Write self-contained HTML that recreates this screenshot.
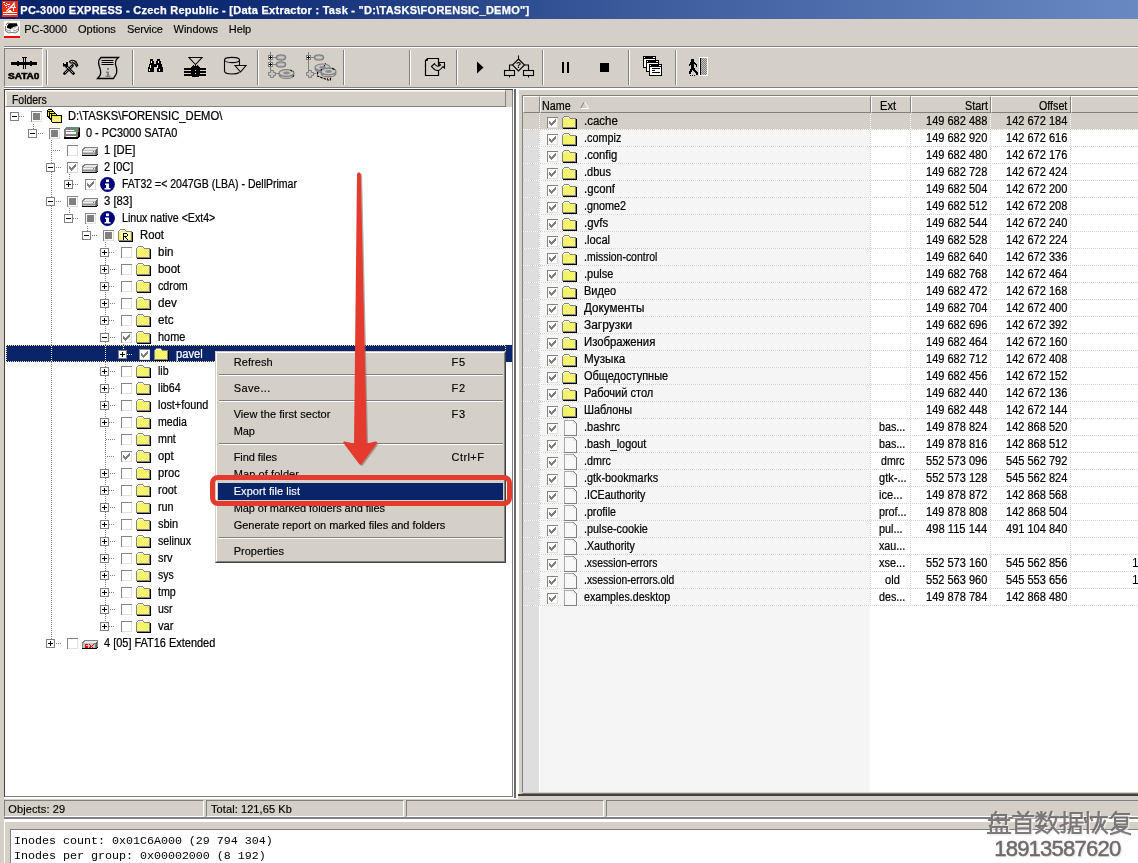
<!DOCTYPE html><html><head><meta charset="utf-8"><title>PC-3000</title><style>html,body{margin:0;padding:0}html{overflow:hidden}body{width:1138px;height:863px;overflow:hidden;position:relative;background:#d4d0c8;font-family:"Liberation Sans",sans-serif}div,span,svg{position:absolute}span{white-space:pre}svg{overflow:visible}</style></head><body><svg width="0" height="0" style="left:0;top:0"><defs><pattern id="yd" width="2" height="2" patternUnits="userSpaceOnUse"><rect width="2" height="2" fill="#ffff00"/><rect x="0" y="0" width="1" height="1" fill="#f0f0c8"/><rect x="1" y="1" width="1" height="1" fill="#f0f0c8"/></pattern><pattern id="dith" width="2" height="2" patternUnits="userSpaceOnUse"><rect width="2" height="2" fill="#808080"/><rect x="0" y="0" width="1" height="1" fill="#c0c0c0"/><rect x="1" y="1" width="1" height="1" fill="#c0c0c0"/></pattern></defs></svg><div id="r" style="left:0;top:0;width:1138px;height:863px;overflow:hidden;will-change:transform"><div style="left:0;top:0;width:1138px;height:19px;background:linear-gradient(90deg,#0a246a 0%,#0e2a72 20%,#3a5a9c 55%,#6889c2 100%);"></div><svg style="left:2px;top:1px" width="16" height="16" viewBox="0 0 16 16">
<rect width="16" height="16" fill="#e8301c"/>
<g shape-rendering="crispEdges" fill="#fff"><rect x="1" y="11" width="14" height="1"/><rect x="1" y="13" width="14" height="1"/><rect x="6" y="10" width="4" height="1"/><rect x="7" y="9" width="2" height="1"/>
<rect x="1" y="1" width="2" height="1"/><rect x="2" y="3" width="1" height="1"/><rect x="4" y="2" width="1" height="1"/><rect x="3" y="4" width="2" height="1"/><rect x="5" y="3" width="2" height="1"/><rect x="4" y="6" width="1" height="1"/><rect x="6" y="5" width="1" height="1"/><rect x="7" y="3" width="1" height="1"/>
<rect x="11" y="6" width="1" height="4"/><rect x="8" y="6" width="6" height="1"/></g>
<path d="M4.500 10.500 L12 2.500 M9.500 6 L12 2 L12.500 6" stroke="#fff" stroke-width="1.100" fill="none"/>
</svg><span style="left:20.30px;top:0px;font:bold 11px/20px 'Liberation Sans',sans-serif;color:#fff;letter-spacing:0.262px;-webkit-text-stroke:0.25px #fff;">PC-3000 EXPRESS - Czech Republic - [Data Extractor : Task - &quot;D:\TASKS\FORENSIC_DEMO&quot;]</span><svg style="left:4px;top:21px" width="16" height="17" viewBox="0 0 16 17">
<rect width="16" height="15" fill="#fff"/>
<path d="M5 2.200 L13 2.200 L13.600 5 L9.500 6 L6.500 8 L3 7 L3 5 Z" fill="#000"/>
<path d="M2 4 Q2.500 2 5 2" fill="none" stroke="#666" stroke-width="1"/>
<path d="M1.500 5 V10 Q4 13 8 11.500 Q12 13 14.500 10 V5.500" fill="none" stroke="#777" stroke-width="1"/>
<path d="M2 8.500 Q4.500 10.500 7 9 M9 9 Q11.500 10.500 14 8 M2.500 10.500 Q5 12 7 11 M9.500 11 Q12 12 13.500 10.300" fill="none" stroke="#999" stroke-width="1"/>
<path d="M7.500 8 L13.500 5.500" stroke="#bbb" stroke-width="1"/>
<rect x="0" y="15" width="16" height="2" fill="#f00"/>
</svg><span style="left:24.30px;top:19px;font:11px/20px 'Liberation Sans',sans-serif;color:#000;letter-spacing:-0.086px;-webkit-text-stroke:0.15px #000;">PC-3000</span><span style="left:78.00px;top:19px;font:11px/20px 'Liberation Sans',sans-serif;color:#000;letter-spacing:-0.018px;-webkit-text-stroke:0.15px #000;">Options</span><span style="left:127.10px;top:19px;font:11px/20px 'Liberation Sans',sans-serif;color:#000;letter-spacing:-0.147px;-webkit-text-stroke:0.15px #000;">Service</span><span style="left:173.60px;top:19px;font:11px/20px 'Liberation Sans',sans-serif;color:#000;letter-spacing:-0.054px;-webkit-text-stroke:0.15px #000;">Windows</span><span style="left:228.80px;top:19px;font:11px/20px 'Liberation Sans',sans-serif;color:#000;letter-spacing:-0.108px;-webkit-text-stroke:0.15px #000;">Help</span><div style="left:4px;top:46px;width:1134px;height:1px;background:#808080;"></div><div style="left:4px;top:47px;width:1134px;height:1px;background:#fff;"></div><div style="left:4px;top:87px;width:1134px;height:1px;background:#808080;"></div><div style="left:4px;top:88px;width:1134px;height:1px;background:#fff;"></div><div style="left:4px;top:48px;width:39px;height:39px;border-top:1px solid #808080;border-left:1px solid #808080;border-right:1px solid #fff;border-bottom:1px solid #fff;box-sizing:border-box;"></div><svg style="left:4px;top:48px" width="39" height="39" viewBox="0 0 39 39" shape-rendering="crispEdges">
<rect x="7" y="14" width="26" height="3" fill="#000"/>
<rect x="13" y="13" width="2" height="5" fill="#000"/><rect x="26" y="13" width="2" height="5" fill="#000"/>
<rect x="12" y="14" width="4" height="3" fill="#000"/>
<rect x="18" y="9" width="5" height="1" fill="#000"/>
<rect x="19" y="9" width="1" height="12" fill="#000"/><rect x="21" y="9" width="1" height="12" fill="#000"/>
<rect x="20" y="10" width="1" height="4" fill="#d4d0c8"/><rect x="20" y="17" width="1" height="4" fill="#d4d0c8"/>
</svg><span style="left:8.35px;top:66px;font:bold 9.5px/20px 'Liberation Sans',sans-serif;color:#000;transform:scaleX(1.0527);transform-origin:0 0;-webkit-text-stroke:0.55px #000;">SATA0</span><div style="left:46px;top:50px;width:1px;height:35px;background:#808080;"></div><div style="left:47px;top:50px;width:1px;height:35px;background:#fff;"></div><div style="left:132px;top:50px;width:1px;height:35px;background:#808080;"></div><div style="left:133px;top:50px;width:1px;height:35px;background:#fff;"></div><div style="left:257px;top:50px;width:1px;height:35px;background:#808080;"></div><div style="left:258px;top:50px;width:1px;height:35px;background:#fff;"></div><div style="left:343px;top:50px;width:1px;height:35px;background:#808080;"></div><div style="left:344px;top:50px;width:1px;height:35px;background:#fff;"></div><div style="left:409px;top:50px;width:1px;height:35px;background:#808080;"></div><div style="left:410px;top:50px;width:1px;height:35px;background:#fff;"></div><div style="left:456px;top:50px;width:1px;height:35px;background:#808080;"></div><div style="left:457px;top:50px;width:1px;height:35px;background:#fff;"></div><div style="left:542px;top:50px;width:1px;height:35px;background:#808080;"></div><div style="left:543px;top:50px;width:1px;height:35px;background:#fff;"></div><div style="left:628px;top:50px;width:1px;height:35px;background:#808080;"></div><div style="left:629px;top:50px;width:1px;height:35px;background:#fff;"></div><div style="left:675px;top:50px;width:1px;height:35px;background:#808080;"></div><div style="left:676px;top:50px;width:1px;height:35px;background:#fff;"></div><svg style="left:62px;top:59px" width="17" height="16" viewBox="0 0 17 16">
<path d="M2.500 14.500 L10.500 6.500" stroke="#000" stroke-width="2.700" stroke-linecap="round" fill="none"/>
<path d="M3 14 L10.500 6.500" stroke="#d4d0c8" stroke-width="1" stroke-dasharray="1.100 0.700" fill="none"/>
<path d="M11.500 14.500 L4.500 7.500" stroke="#000" stroke-width="2.700" stroke-linecap="round" fill="none"/>
<path d="M11 14 L4.500 7.500" stroke="#d4d0c8" stroke-width="1" stroke-dasharray="1.100 0.700" fill="none"/>
<path d="M1 4 h2 v-1 h3 v4.500 h-5 z" fill="#000"/><rect x="2" y="3" width="2" height="2" fill="#d4d0c8"/>
<path d="M7.500 2.500 Q11 -0.300 14.300 3 L15.800 6.300 L14.500 7.600 L13 5 L11 3.800 L8.500 4 Z" fill="#d4d0c8" stroke="#000" stroke-width="1.100"/>
<path d="M10 2.500 L11.500 3.500 M12.500 2.500 L13.500 4.500 M14 4.500 L14.800 6" stroke="#000" stroke-width="0.800"/>
</svg><svg style="left:96px;top:56px" width="24" height="24" viewBox="0 0 24 24">
<path d="M5 1.5 H22.5 L20 4 Q18.5 8 20.5 12 Q21.5 17 19 20 L17.5 22.5 H1.5 L4 19.5 Q5.5 16 3.5 11 Q2 6 3 4 Z" fill="none" stroke="#000" stroke-width="1.3"/>
<path d="M5.5 4.5 H17.5 M5.5 6.5 H17.5 M5.5 8.5 H17.5" stroke="#000" stroke-width="1.1"/>
<rect x="11" y="12" width="2" height="2" fill="#808080"/><path d="M10 15.5 h3 v4 h1.5 v1.5 h-5 v-1.5 h1.5 v-2.5 h-1 z" fill="#808080"/>
</svg><svg style="left:147px;top:58px" width="16" height="15" viewBox="0 0 17 15" preserveAspectRatio="none" shape-rendering="crispEdges">
<path d="M3 1h3v2h1v3h3V3h1V1h3v2h1v3h1v3h1v5h-6V9H7v5H1V9h1V6h1V3z" fill="#000"/>
<rect x="4" y="3" width="1" height="2" fill="#fff"/><rect x="12" y="3" width="1" height="2" fill="#fff"/>
<rect x="3" y="7" width="1" height="3" fill="#fff"/><rect x="11" y="7" width="1" height="3" fill="#fff"/>
<rect x="2" y="11" width="1" height="2" fill="#fff"/><rect x="13" y="11" width="1" height="2" fill="#fff"/>
<rect x="8" y="6" width="1" height="2" fill="#d4d0c8"/>
</svg><svg style="left:183px;top:56px" width="24" height="22" viewBox="0 0 24 22">
<path d="M6 1.500 H19 L12.500 8.500 Z" fill="none" stroke="#000" stroke-width="1.100"/>
<g shape-rendering="crispEdges"><rect x="1" y="12" width="22" height="2" fill="#000"/><rect x="1" y="15" width="22" height="2" fill="#000"/><rect x="1" y="18" width="22" height="2" fill="#000"/>
<rect x="8" y="11" width="9" height="9" fill="#000"/><rect x="9" y="10" width="7" height="1" fill="#000"/><rect x="10" y="9" width="1" height="1" fill="#000"/><rect x="12" y="9" width="1" height="1" fill="#000"/><rect x="14" y="9" width="1" height="1" fill="#000"/>
<rect x="12" y="14" width="1" height="1" fill="#d4d0c8"/><rect x="12" y="17" width="1" height="1" fill="#d4d0c8"/><rect x="9" y="20" width="7" height="1" fill="#000"/></g>
</svg><svg style="left:223px;top:56px" width="25" height="20" viewBox="0 0 25 20">
<ellipse cx="9" cy="4" rx="7.5" ry="2.6" fill="none" stroke="#000" stroke-width="1.1"/>
<path d="M1.5 4 V15 Q1.5 18 9 18 Q14 18 16.5 16.5 M16.5 4 V9" fill="none" stroke="#000" stroke-width="1.1"/>
<path d="M12 9.5 H23 L17.5 16 Z" fill="#d4d0c8" stroke="#000" stroke-width="1.1"/>
</svg><svg style="left:267px;top:51px" width="32" height="30" viewBox="0 0 32 30"><rect x="3" y="1" width="1" height="19" fill="#808080"/><rect x="1" y="4" width="5" height="5" fill="#808080"/><rect x="2" y="5" width="3" height="3" fill="#fff"/><rect x="3" y="5" width="1" height="3" fill="#000"/><rect x="2" y="6" width="3" height="1" fill="#000"/><rect x="6" y="6" width="3" height="1" fill="#808080"/><ellipse cx="14" cy="6.5" rx="4.600" ry="2.600" fill="#b4b4b4" stroke="#808080" stroke-width="1.400"/><path d="M11.500 7.0 Q14 5.0 16.500 7.0" stroke="#d8d8d8" stroke-width="1" fill="none"/><rect x="1" y="11" width="5" height="5" fill="#808080"/><rect x="2" y="12" width="3" height="3" fill="#fff"/><rect x="3" y="12" width="1" height="3" fill="#000"/><rect x="2" y="13" width="3" height="1" fill="#000"/><rect x="6" y="13" width="3" height="1" fill="#808080"/><ellipse cx="14" cy="13.5" rx="4.600" ry="2.600" fill="#b4b4b4" stroke="#808080" stroke-width="1.400"/><path d="M11.500 14.0 Q14 12.0 16.500 14.0" stroke="#d8d8d8" stroke-width="1" fill="none"/><path d="M3.500 19.500 h3 v2 h2 v3 h-2 v2 h-3 v-2 h-2 v-3 h2 z" fill="#c4c4c4" stroke="#808080" stroke-width="1"/><rect x="9" y="22" width="3" height="1" fill="#808080"/><ellipse cx="19.5" cy="24" rx="7.500" ry="3.300" fill="#a8a8a8" stroke="#808080" stroke-width="1.200"/><rect x="14.5" y="25.5" width="10" height="1" fill="#d0d0d0"/><ellipse cx="19.5" cy="22" rx="7.500" ry="3.300" fill="#c8c8c8" stroke="#808080" stroke-width="1.200"/><ellipse cx="19.5" cy="22" rx="3.200" ry="1.400" fill="#8c8c8c"/><path d="M23.500 19.300 L26.300 20.500 M26.800 24.500 L25.500 26" stroke="#000" stroke-width="1.100" stroke-dasharray="1.500 1.200" fill="none"/></svg><svg style="left:305px;top:51px" width="32" height="30" viewBox="0 0 32 30"><rect x="3" y="1" width="1" height="19" fill="#808080"/><rect x="1" y="4" width="5" height="5" fill="#808080"/><rect x="2" y="5" width="3" height="3" fill="#fff"/><rect x="3" y="5" width="1" height="3" fill="#000"/><rect x="2" y="6" width="3" height="1" fill="#000"/><rect x="6" y="6" width="3" height="1" fill="#808080"/><ellipse cx="14" cy="6.5" rx="4.600" ry="2.600" fill="#b4b4b4" stroke="#808080" stroke-width="1.400"/><path d="M11.500 7.0 Q14 5.0 16.500 7.0" stroke="#d8d8d8" stroke-width="1" fill="none"/><path d="M3.500 19.500 h3 v2 h2 v3 h-2 v2 h-3 v-2 h-2 v-3 h2 z" fill="#c4c4c4" stroke="#808080" stroke-width="1"/><rect x="9" y="22" width="2" height="1" fill="#808080"/><ellipse cx="17.500" cy="18" rx="7.500" ry="3.300" fill="#a8a8a8" stroke="#808080" stroke-width="1.200"/><ellipse cx="17.500" cy="16.300" rx="7.500" ry="3.300" fill="#c8c8c8" stroke="#808080" stroke-width="1.200"/><ellipse cx="17.500" cy="16.300" rx="3.200" ry="1.400" fill="#8c8c8c"/><path d="M12.500 21 V25 L23 29 L25.500 29 L25.500 26" fill="none" stroke="#000" stroke-width="1.200" stroke-dasharray="2.500 1"/><ellipse cx="23.5" cy="22.5" rx="7.500" ry="3.300" fill="#a8a8a8" stroke="#808080" stroke-width="1.200"/><rect x="18.5" y="24.0" width="10" height="1" fill="#d0d0d0"/><ellipse cx="23.5" cy="20.5" rx="7.500" ry="3.300" fill="#c8c8c8" stroke="#808080" stroke-width="1.200"/><ellipse cx="23.5" cy="20.5" rx="3.200" ry="1.400" fill="#8c8c8c"/><path d="M16 19.500 L16.500 18 M19 15 L20 14.500 M27 17.300 L29.500 18.500" stroke="#000" stroke-width="1.100" fill="none"/><rect x="20" y="12" width="1" height="1" fill="#c00000"/><rect x="22" y="27" width="1" height="1" fill="#c00000"/></svg><svg style="left:424px;top:57px" width="23" height="20" viewBox="0 0 23 20">
<path d="M3.500 1.500 H14.500 V18.500 H1.500 V3.500 Z" fill="none" stroke="#000" stroke-width="1.200"/>
<path d="M1.500 3.500 H3.500 V1.500" fill="none" stroke="#000" stroke-width="1"/>
<path d="M7.500 9.500 L10.500 6.500 L11.500 8 Q13.500 10.500 16.500 8 L15 6.500 V5.500 H20.500 V11 L19 9.500 Q15 15.500 10.500 12.500 Z" fill="#d4d0c8" stroke="#000" stroke-width="1.100"/>
</svg><svg style="left:476px;top:61px" width="9" height="13" viewBox="0 0 9 13"><path d="M1 0.500 L7.500 6.500 L1 12.500 Z" fill="#000"/></svg><svg style="left:503px;top:55px" width="33" height="23" viewBox="0 0 33 23">
<path d="M15.500 0.500 V4" stroke="#000"/>
<path d="M15.500 4 L21.500 10 L15.500 16 L9.500 10 Z" fill="#d4d0c8" stroke="#000" stroke-width="1.100"/>
<path d="M9.500 10 H6.500 V15 M21.500 10 H25.500 V15" fill="none" stroke="#000" stroke-width="1.100"/>
<rect x="1.500" y="15.500" width="10" height="5" fill="#d4d0c8" stroke="#000" stroke-width="1.100"/>
<rect x="20.500" y="15.500" width="10" height="5" fill="#d4d0c8" stroke="#000" stroke-width="1.100"/>
<path d="M6.500 20.500 V22.500 M25.500 20.500 V22.500" stroke="#000"/>
<text x="15.500" y="13" font-family="Liberation Sans" font-size="8.500" font-weight="bold" text-anchor="middle" fill="#000">?</text>
</svg><div style="left:562px;top:62px;width:2px;height:11px;background:#000;"></div><div style="left:567px;top:62px;width:2px;height:11px;background:#000;"></div><div style="left:600px;top:63px;width:9px;height:9px;background:#000;"></div><svg style="left:642px;top:55px" width="22" height="22" viewBox="0 0 22 22" shape-rendering="crispEdges"><rect x="1" y="1" width="13" height="12" fill="#000"/><rect x="2" y="4" width="11" height="8" fill="#fff"/><rect x="2" y="2" width="1" height="1" fill="#fff"/><rect x="11" y="2" width="2" height="1" fill="#fff"/><rect x="4" y="5" width="13" height="12" fill="#000"/><rect x="5" y="8" width="11" height="8" fill="#fff"/><rect x="5" y="6" width="1" height="1" fill="#fff"/><rect x="14" y="6" width="2" height="1" fill="#fff"/><rect x="7" y="9" width="13" height="12" fill="#000"/><rect x="8" y="12" width="11" height="8" fill="#fff"/><rect x="8" y="10" width="1" height="1" fill="#fff"/><rect x="17" y="10" width="2" height="1" fill="#fff"/><rect x="10" y="13" width="8" height="1" fill="#000"/><rect x="10" y="15" width="3" height="1" fill="#000"/><rect x="10" y="17" width="8" height="1" fill="#000"/></svg><svg style="left:689px;top:59px" width="9" height="17" viewBox="0 0 9 17" shape-rendering="crispEdges"><rect x="2" y="0" width="1" height="1" fill="#000"/><rect x="3" y="0" width="1" height="1" fill="#000"/><rect x="4" y="0" width="1" height="1" fill="#000"/><rect x="2" y="1" width="1" height="1" fill="#000"/><rect x="3" y="1" width="1" height="1" fill="#000"/><rect x="4" y="1" width="1" height="1" fill="#000"/><rect x="2" y="2" width="1" height="1" fill="#000"/><rect x="3" y="2" width="1" height="1" fill="#000"/><rect x="4" y="2" width="1" height="1" fill="#000"/><rect x="1" y="3" width="1" height="1" fill="#000"/><rect x="2" y="3" width="1" height="1" fill="#000"/><rect x="3" y="3" width="1" height="1" fill="#000"/><rect x="4" y="3" width="1" height="1" fill="#000"/><rect x="5" y="3" width="1" height="1" fill="#000"/><rect x="1" y="4" width="1" height="1" fill="#000"/><rect x="2" y="4" width="1" height="1" fill="#000"/><rect x="3" y="4" width="1" height="1" fill="#000"/><rect x="4" y="4" width="1" height="1" fill="#000"/><rect x="5" y="4" width="1" height="1" fill="#000"/><rect x="6" y="4" width="1" height="1" fill="#000"/><rect x="0" y="5" width="1" height="1" fill="#000"/><rect x="1" y="5" width="1" height="1" fill="#000"/><rect x="2" y="5" width="1" height="1" fill="#000"/><rect x="3" y="5" width="1" height="1" fill="#000"/><rect x="4" y="5" width="1" height="1" fill="#000"/><rect x="6" y="5" width="1" height="1" fill="#000"/><rect x="7" y="5" width="1" height="1" fill="#000"/><rect x="0" y="6" width="1" height="1" fill="#000"/><rect x="2" y="6" width="1" height="1" fill="#000"/><rect x="3" y="6" width="1" height="1" fill="#000"/><rect x="4" y="6" width="1" height="1" fill="#000"/><rect x="7" y="6" width="1" height="1" fill="#000"/><rect x="2" y="7" width="1" height="1" fill="#000"/><rect x="3" y="7" width="1" height="1" fill="#000"/><rect x="4" y="7" width="1" height="1" fill="#000"/><rect x="7" y="7" width="1" height="1" fill="#000"/><rect x="2" y="8" width="1" height="1" fill="#000"/><rect x="3" y="8" width="1" height="1" fill="#000"/><rect x="4" y="8" width="1" height="1" fill="#000"/><rect x="2" y="9" width="1" height="1" fill="#000"/><rect x="3" y="9" width="1" height="1" fill="#000"/><rect x="4" y="9" width="1" height="1" fill="#000"/><rect x="5" y="9" width="1" height="1" fill="#000"/><rect x="1" y="10" width="1" height="1" fill="#000"/><rect x="2" y="10" width="1" height="1" fill="#000"/><rect x="3" y="10" width="1" height="1" fill="#000"/><rect x="4" y="10" width="1" height="1" fill="#000"/><rect x="5" y="10" width="1" height="1" fill="#000"/><rect x="1" y="11" width="1" height="1" fill="#000"/><rect x="2" y="11" width="1" height="1" fill="#000"/><rect x="4" y="11" width="1" height="1" fill="#000"/><rect x="5" y="11" width="1" height="1" fill="#000"/><rect x="6" y="11" width="1" height="1" fill="#000"/><rect x="0" y="12" width="1" height="1" fill="#000"/><rect x="1" y="12" width="1" height="1" fill="#000"/><rect x="2" y="12" width="1" height="1" fill="#000"/><rect x="5" y="12" width="1" height="1" fill="#000"/><rect x="6" y="12" width="1" height="1" fill="#000"/><rect x="7" y="12" width="1" height="1" fill="#000"/><rect x="0" y="13" width="1" height="1" fill="#000"/><rect x="1" y="13" width="1" height="1" fill="#000"/><rect x="6" y="13" width="1" height="1" fill="#000"/><rect x="7" y="13" width="1" height="1" fill="#000"/><rect x="8" y="13" width="1" height="1" fill="#000"/><rect x="0" y="14" width="1" height="1" fill="#000"/><rect x="1" y="14" width="1" height="1" fill="#000"/><rect x="7" y="14" width="1" height="1" fill="#000"/><rect x="8" y="14" width="1" height="1" fill="#000"/><rect x="7" y="15" width="1" height="1" fill="#000"/><rect x="8" y="15" width="1" height="1" fill="#000"/><rect x="1" y="16" width="1" height="1" fill="#000"/><rect x="3" y="16" width="1" height="1" fill="#000"/><rect x="5" y="16" width="1" height="1" fill="#000"/></svg><svg style="left:699px;top:57px" width="9" height="19" viewBox="0 0 9 19" shape-rendering="crispEdges"><rect width="9" height="19" fill="#fff"/><rect x="1" y="1" width="7" height="17" fill="url(#dith)"/><rect x="1" y="1" width="1" height="17" fill="#000"/></svg><div style="left:4px;top:89px;width:510px;height:709px;background:#fff;"></div><div style="left:4px;top:89px;width:509px;height:1px;background:#404040;"></div><div style="left:4px;top:89px;width:1px;height:708px;background:#404040;"></div><div style="left:512px;top:90px;width:1px;height:707px;background:#808080;"></div><div style="left:513px;top:89px;width:1px;height:709px;background:#fff;"></div><div style="left:5px;top:796px;width:508px;height:1px;background:#808080;"></div><div style="left:4px;top:797px;width:514px;height:2px;background:#fff;"></div><div style="left:5px;top:90px;width:507px;height:17px;background:#d4d0c8;"></div><div style="left:5px;top:90px;width:501px;height:17px;background:#d4d0c8;box-sizing:border-box;border-top:1px solid #fff;border-left:1px solid #fff;border-right:1px solid #808080;border-bottom:1px solid #808080;"></div><div style="left:6px;top:91px;width:499px;height:1px;background:#ebe9e4;"></div><div style="left:6px;top:91px;width:1px;height:15px;background:#ebe9e4;"></div><span style="left:11.80px;top:90px;font:12px/20px 'Liberation Sans',sans-serif;color:#000;transform:scaleX(0.8697);transform-origin:0 0;-webkit-text-stroke:0.22px #000;">Folders</span><div style="left:516px;top:89px;width:2px;height:710px;background:#fff;"></div><div style="left:518px;top:89px;width:1px;height:705px;background:#fff;"></div><div style="left:514px;top:89px;width:2px;height:709px;background:#6c6c6c;"></div><div style="left:516px;top:88px;width:622px;height:2px;background:#fff;"></div><div style="left:519px;top:90px;width:619px;height:703px;background:#d4d0c8;"></div><div style="left:522px;top:793px;width:616px;height:1px;background:#808080;"></div><div style="left:518px;top:794px;width:620px;height:2px;background:#404040;"></div><div style="left:522px;top:95px;width:616px;height:1px;background:#808080;"></div><div style="left:522px;top:95px;width:1px;height:697px;background:#808080;"></div><div style="left:523px;top:96px;width:615px;height:696px;background:#fff;"></div><div style="left:6px;top:345px;width:506px;height:17px;background:#0a246a;"></div><div style="left:6px;top:345px;width:500px;height:1px;background:repeating-linear-gradient(to right,#f8dc90 0,#f8dc90 1px,transparent 1px,transparent 2px);"></div><div style="left:6px;top:361px;width:500px;height:1px;background:repeating-linear-gradient(to right,#f8dc90 0,#f8dc90 1px,transparent 1px,transparent 2px);"></div><div style="left:6px;top:345px;width:1px;height:17px;background:repeating-linear-gradient(to bottom,#f8dc90 0,#f8dc90 1px,transparent 1px,transparent 2px);"></div><div style="left:505px;top:345px;width:1px;height:17px;background:repeating-linear-gradient(to bottom,transparent 0,transparent 1px,#f8dc90 1px,#f8dc90 2px);"></div><div style="left:33px;top:123px;width:1px;height:11px;background:repeating-linear-gradient(to bottom,transparent 0,transparent 1px,#808080 1px,#808080 2px);"></div><div style="left:51px;top:140px;width:1px;height:504px;background:repeating-linear-gradient(to bottom,#808080 0,#808080 1px,transparent 1px,transparent 2px);"></div><div style="left:69px;top:174px;width:1px;height:11px;background:repeating-linear-gradient(to bottom,#808080 0,#808080 1px,transparent 1px,transparent 2px);"></div><div style="left:69px;top:208px;width:1px;height:11px;background:repeating-linear-gradient(to bottom,#808080 0,#808080 1px,transparent 1px,transparent 2px);"></div><div style="left:87px;top:225px;width:1px;height:11px;background:repeating-linear-gradient(to bottom,transparent 0,transparent 1px,#808080 1px,#808080 2px);"></div><div style="left:105px;top:242px;width:1px;height:385px;background:repeating-linear-gradient(to bottom,#808080 0,#808080 1px,transparent 1px,transparent 2px);"></div><div style="left:123px;top:344px;width:1px;height:11px;background:repeating-linear-gradient(to bottom,#808080 0,#808080 1px,transparent 1px,transparent 2px);"></div><div style="left:19px;top:116px;width:6px;height:1px;background:repeating-linear-gradient(to right,#808080 0,#808080 1px,transparent 1px,transparent 2px);"></div><svg style="left:10px;top:112px" width="9" height="9" viewBox="0 0 9 9" shape-rendering="crispEdges"><rect x="0.500" y="0.500" width="8" height="8" fill="#fff" stroke="#808080"/><rect x="2" y="4" width="5" height="1" fill="#000"/></svg><svg style="left:31px;top:111px" width="11" height="11" viewBox="0 0 11 11" shape-rendering="crispEdges"><rect x="0" y="0" width="11" height="11" fill="#e6e0d8"/><path d="M0 0h11v1H1v10H0z" fill="#848484"/><rect x="1" y="1" width="9" height="9" fill="#fff"/><rect x="2" y="2" width="7" height="7" fill="#808080"/></svg><svg style="left:46px;top:109px" width="16" height="14" viewBox="0 0 16 14" shape-rendering="crispEdges"><path d="M1 1h1V0h4v1h1v1h1v7H2V8H1z" fill="#000"/><path d="M2 1h4v1H2z M2 3h1v4H2z" fill="#ffff00"/><path d="M3 3h1V2h4v1h1v1h1v7H4v-1H3z" fill="#000"/><path d="M4 3h4v1H4z M4 5h1v4H4z" fill="#ffff00"/><path d="M5 5h1V4h4v1h1v1h5v8H6v-1H5z" fill="#000"/><path d="M6 5h4v1H6z" fill="#ffff00"/><path d="M6 7h9v6H6z" fill="url(#yd)"/></svg><span style="left:67.70px;top:106px;font:12px/20px 'Liberation Sans',sans-serif;color:#000;transform:scaleX(0.9344);transform-origin:0 0;-webkit-text-stroke:0.22px #000;">D:\TASKS\FORENSIC_DEMO\</span><div style="left:37px;top:133px;width:6px;height:1px;background:repeating-linear-gradient(to right,transparent 0,transparent 1px,#808080 1px,#808080 2px);"></div><svg style="left:28px;top:129px" width="9" height="9" viewBox="0 0 9 9" shape-rendering="crispEdges"><rect x="0.500" y="0.500" width="8" height="8" fill="#fff" stroke="#808080"/><rect x="2" y="4" width="5" height="1" fill="#000"/></svg><svg style="left:49px;top:128px" width="11" height="11" viewBox="0 0 11 11" shape-rendering="crispEdges"><rect x="0" y="0" width="11" height="11" fill="#e6e0d8"/><path d="M0 0h11v1H1v10H0z" fill="#848484"/><rect x="1" y="1" width="9" height="9" fill="#fff"/><rect x="2" y="2" width="7" height="7" fill="#808080"/></svg><svg style="left:64px;top:127px" width="16" height="12" viewBox="0 0 16 12" shape-rendering="crispEdges"><path d="M2 0h13l1 1v8l-2 2H0V2z" fill="#808080"/><path d="M3 0h12l-1 1H2z" fill="#5f8f8f"/><path d="M1 2h12v8H1z" fill="#808080"/><path d="M2 3h10v1H2z M2 5h10v2H2z M2 9h10v1H2z" fill="#fff"/><path d="M2 4h10v1H2z" fill="#909090"/><rect x="10" y="3" width="2" height="2" fill="#00e000"/><path d="M14 1h1v8l-1 1z" fill="#606060"/><path d="M15 1h1v8l-2 2v-1z" fill="#000"/><path d="M0 10h14v1H0z M0 11h14v1H0z" fill="#000"/></svg><span style="left:85.70px;top:123px;font:12px/20px 'Liberation Sans',sans-serif;color:#000;transform:scaleX(0.9105);transform-origin:0 0;-webkit-text-stroke:0.22px #000;">0 - PC3000 SATA0</span><div style="left:51px;top:150px;width:10px;height:1px;background:repeating-linear-gradient(to right,#808080 0,#808080 1px,transparent 1px,transparent 2px);"></div><svg style="left:67px;top:145px" width="11" height="11" viewBox="0 0 11 11" shape-rendering="crispEdges"><rect x="0" y="0" width="11" height="11" fill="#e6e0d8"/><path d="M0 0h11v1H1v10H0z" fill="#848484"/><rect x="1" y="1" width="9" height="9" fill="#fff"/></svg><svg style="left:82px;top:147px" width="16" height="9" viewBox="0 0 16 9" shape-rendering="crispEdges"><path d="M2 0h13l1 1v6l-2 2H0V3z" fill="#808080"/><path d="M3 1h12l-2 2H1z" fill="#e8e8e8"/><path d="M1 3h12v5H1z" fill="#c0c0c0"/><path d="M1 4h12v1H1z" fill="#f4f4f4"/><path d="M1 6h12v1H1z" fill="#909090"/><path d="M14 2l1-1v6l-1 1z" fill="#606060"/><path d="M0 8h14l2-2v1l-2 2H0z" fill="#000"/><rect x="11" y="4" width="1" height="1" fill="#00c000"/></svg><span style="left:103.70px;top:140px;font:12px/20px 'Liberation Sans',sans-serif;color:#000;transform:scaleX(0.9387);transform-origin:0 0;-webkit-text-stroke:0.22px #000;">1 [DE]</span><div style="left:55px;top:167px;width:6px;height:1px;background:repeating-linear-gradient(to right,transparent 0,transparent 1px,#808080 1px,#808080 2px);"></div><svg style="left:46px;top:163px" width="9" height="9" viewBox="0 0 9 9" shape-rendering="crispEdges"><rect x="0.500" y="0.500" width="8" height="8" fill="#fff" stroke="#808080"/><rect x="2" y="4" width="5" height="1" fill="#000"/></svg><svg style="left:67px;top:162px" width="11" height="11" viewBox="0 0 11 11" shape-rendering="crispEdges"><rect x="0" y="0" width="11" height="11" fill="#e6e0d8"/><path d="M0 0h11v1H1v10H0z" fill="#848484"/><rect x="1" y="1" width="9" height="9" fill="#fff"/><path d="M2 4h1v1h1v1h1v-1h1v-1h1v-1h1v-1h1v3h-1v1h-1v1h-1v1h-1v1h-1v-1h-1v-1h-1z" fill="#808080"/></svg><svg style="left:82px;top:164px" width="16" height="9" viewBox="0 0 16 9" shape-rendering="crispEdges"><path d="M2 0h13l1 1v6l-2 2H0V3z" fill="#808080"/><path d="M3 1h12l-2 2H1z" fill="#e8e8e8"/><path d="M1 3h12v5H1z" fill="#c0c0c0"/><path d="M1 4h12v1H1z" fill="#f4f4f4"/><path d="M1 6h12v1H1z" fill="#909090"/><path d="M14 2l1-1v6l-1 1z" fill="#606060"/><path d="M0 8h14l2-2v1l-2 2H0z" fill="#000"/><rect x="11" y="4" width="1" height="1" fill="#00c000"/></svg><span style="left:103.70px;top:157px;font:12px/20px 'Liberation Sans',sans-serif;color:#000;transform:scaleX(0.9152);transform-origin:0 0;-webkit-text-stroke:0.22px #000;">2 [0C]</span><div style="left:73px;top:184px;width:6px;height:1px;background:repeating-linear-gradient(to right,#808080 0,#808080 1px,transparent 1px,transparent 2px);"></div><svg style="left:64px;top:180px" width="9" height="9" viewBox="0 0 9 9" shape-rendering="crispEdges"><rect x="0.500" y="0.500" width="8" height="8" fill="#fff" stroke="#808080"/><rect x="2" y="4" width="5" height="1" fill="#000"/><rect x="4" y="2" width="1" height="5" fill="#000"/></svg><svg style="left:85px;top:179px" width="11" height="11" viewBox="0 0 11 11" shape-rendering="crispEdges"><rect x="0" y="0" width="11" height="11" fill="#e6e0d8"/><path d="M0 0h11v1H1v10H0z" fill="#848484"/><rect x="1" y="1" width="9" height="9" fill="#fff"/><path d="M2 4h1v1h1v1h1v-1h1v-1h1v-1h1v-1h1v3h-1v1h-1v1h-1v1h-1v1h-1v-1h-1v-1h-1z" fill="#808080"/></svg><svg style="left:100px;top:177px" width="15" height="15" viewBox="0 0 15 15"><circle cx="7.500" cy="7.500" r="7.400" fill="#00007c"/><rect x="6" y="2.500" width="3" height="2.600" fill="#fff"/><path d="M5 6.500h4v4.500h1.500v1.500h-6v-1.500H6V8H5z" fill="#fff"/></svg><span style="left:121.70px;top:174px;font:12px/20px 'Liberation Sans',sans-serif;color:#000;transform:scaleX(0.8751);transform-origin:0 0;-webkit-text-stroke:0.22px #000;">FAT32 =&lt; 2047GB (LBA) - DellPrimar</span><div style="left:55px;top:201px;width:6px;height:1px;background:repeating-linear-gradient(to right,transparent 0,transparent 1px,#808080 1px,#808080 2px);"></div><svg style="left:46px;top:197px" width="9" height="9" viewBox="0 0 9 9" shape-rendering="crispEdges"><rect x="0.500" y="0.500" width="8" height="8" fill="#fff" stroke="#808080"/><rect x="2" y="4" width="5" height="1" fill="#000"/></svg><svg style="left:67px;top:196px" width="11" height="11" viewBox="0 0 11 11" shape-rendering="crispEdges"><rect x="0" y="0" width="11" height="11" fill="#e6e0d8"/><path d="M0 0h11v1H1v10H0z" fill="#848484"/><rect x="1" y="1" width="9" height="9" fill="#fff"/><rect x="2" y="2" width="7" height="7" fill="#808080"/></svg><svg style="left:82px;top:198px" width="16" height="9" viewBox="0 0 16 9" shape-rendering="crispEdges"><path d="M2 0h13l1 1v6l-2 2H0V3z" fill="#808080"/><path d="M3 1h12l-2 2H1z" fill="#e8e8e8"/><path d="M1 3h12v5H1z" fill="#c0c0c0"/><path d="M1 4h12v1H1z" fill="#f4f4f4"/><path d="M1 6h12v1H1z" fill="#909090"/><path d="M14 2l1-1v6l-1 1z" fill="#606060"/><path d="M0 8h14l2-2v1l-2 2H0z" fill="#000"/><rect x="11" y="4" width="1" height="1" fill="#00c000"/></svg><span style="left:103.70px;top:191px;font:12px/20px 'Liberation Sans',sans-serif;color:#000;transform:scaleX(0.9426);transform-origin:0 0;-webkit-text-stroke:0.22px #000;">3 [83]</span><div style="left:73px;top:218px;width:6px;height:1px;background:repeating-linear-gradient(to right,#808080 0,#808080 1px,transparent 1px,transparent 2px);"></div><svg style="left:64px;top:214px" width="9" height="9" viewBox="0 0 9 9" shape-rendering="crispEdges"><rect x="0.500" y="0.500" width="8" height="8" fill="#fff" stroke="#808080"/><rect x="2" y="4" width="5" height="1" fill="#000"/></svg><svg style="left:85px;top:213px" width="11" height="11" viewBox="0 0 11 11" shape-rendering="crispEdges"><rect x="0" y="0" width="11" height="11" fill="#e6e0d8"/><path d="M0 0h11v1H1v10H0z" fill="#848484"/><rect x="1" y="1" width="9" height="9" fill="#fff"/><rect x="2" y="2" width="7" height="7" fill="#808080"/></svg><svg style="left:100px;top:211px" width="15" height="15" viewBox="0 0 15 15"><circle cx="7.500" cy="7.500" r="7.400" fill="#00007c"/><rect x="6" y="2.500" width="3" height="2.600" fill="#fff"/><path d="M5 6.500h4v4.500h1.500v1.500h-6v-1.500H6V8H5z" fill="#fff"/></svg><span style="left:121.70px;top:208px;font:12px/20px 'Liberation Sans',sans-serif;color:#000;transform:scaleX(0.8852);transform-origin:0 0;-webkit-text-stroke:0.22px #000;">Linux native &lt;Ext4&gt;</span><div style="left:91px;top:235px;width:6px;height:1px;background:repeating-linear-gradient(to right,transparent 0,transparent 1px,#808080 1px,#808080 2px);"></div><svg style="left:82px;top:231px" width="9" height="9" viewBox="0 0 9 9" shape-rendering="crispEdges"><rect x="0.500" y="0.500" width="8" height="8" fill="#fff" stroke="#808080"/><rect x="2" y="4" width="5" height="1" fill="#000"/></svg><svg style="left:103px;top:230px" width="11" height="11" viewBox="0 0 11 11" shape-rendering="crispEdges"><rect x="0" y="0" width="11" height="11" fill="#e6e0d8"/><path d="M0 0h11v1H1v10H0z" fill="#848484"/><rect x="1" y="1" width="9" height="9" fill="#fff"/><rect x="2" y="2" width="7" height="7" fill="#808080"/></svg><svg style="left:118px;top:229px" width="15" height="13" viewBox="0 0 15 13" shape-rendering="crispEdges"><path d="M2 0h5v1h1v1h6v10H0V2h1V1h1z" fill="#84848c"/><path d="M2 1h5v1h1v1h5v8H1V2h1z" fill="url(#yd)"/><path d="M2 1h5v1H2z M1 2h1v1H1z" fill="#ffffd8"/><path d="M14 3h1v10H1v-1h13z" fill="#000"/><rect x="3" y="3" width="9" height="8" fill="#fbfbb0"/><rect x="5" y="4" width="1" height="1" fill="#000"/><rect x="6" y="4" width="1" height="1" fill="#000"/><rect x="7" y="4" width="1" height="1" fill="#000"/><rect x="8" y="4" width="1" height="1" fill="#000"/><rect x="5" y="5" width="1" height="1" fill="#000"/><rect x="9" y="5" width="1" height="1" fill="#000"/><rect x="5" y="6" width="1" height="1" fill="#000"/><rect x="9" y="6" width="1" height="1" fill="#000"/><rect x="5" y="7" width="1" height="1" fill="#000"/><rect x="6" y="7" width="1" height="1" fill="#000"/><rect x="7" y="7" width="1" height="1" fill="#000"/><rect x="8" y="7" width="1" height="1" fill="#000"/><rect x="5" y="8" width="1" height="1" fill="#000"/><rect x="7" y="8" width="1" height="1" fill="#000"/><rect x="5" y="9" width="1" height="1" fill="#000"/><rect x="8" y="9" width="1" height="1" fill="#000"/><rect x="5" y="10" width="1" height="1" fill="#000"/><rect x="9" y="10" width="1" height="1" fill="#000"/></svg><span style="left:139.70px;top:225px;font:12px/20px 'Liberation Sans',sans-serif;color:#000;transform:scaleX(0.9429);transform-origin:0 0;-webkit-text-stroke:0.22px #000;">Root</span><div style="left:109px;top:252px;width:6px;height:1px;background:repeating-linear-gradient(to right,#808080 0,#808080 1px,transparent 1px,transparent 2px);"></div><svg style="left:100px;top:248px" width="9" height="9" viewBox="0 0 9 9" shape-rendering="crispEdges"><rect x="0.500" y="0.500" width="8" height="8" fill="#fff" stroke="#808080"/><rect x="2" y="4" width="5" height="1" fill="#000"/><rect x="4" y="2" width="1" height="5" fill="#000"/></svg><svg style="left:121px;top:247px" width="11" height="11" viewBox="0 0 11 11" shape-rendering="crispEdges"><rect x="0" y="0" width="11" height="11" fill="#e6e0d8"/><path d="M0 0h11v1H1v10H0z" fill="#848484"/><rect x="1" y="1" width="9" height="9" fill="#fff"/></svg><svg style="left:136px;top:246px" width="15" height="13" viewBox="0 0 15 13" shape-rendering="crispEdges"><path d="M2 0h5v1h1v1h6v10H0V2h1V1h1z" fill="#84848c"/><path d="M2 1h5v1h1v1h5v8H1V2h1z" fill="url(#yd)"/><path d="M2 1h5v1H2z M1 2h1v1H1z" fill="#ffffd8"/><path d="M14 3h1v10H1v-1h13z" fill="#000"/></svg><span style="left:157.70px;top:242px;font:12px/20px 'Liberation Sans',sans-serif;color:#000;transform:scaleX(0.9554);transform-origin:0 0;-webkit-text-stroke:0.22px #000;">bin</span><div style="left:109px;top:269px;width:6px;height:1px;background:repeating-linear-gradient(to right,transparent 0,transparent 1px,#808080 1px,#808080 2px);"></div><svg style="left:100px;top:265px" width="9" height="9" viewBox="0 0 9 9" shape-rendering="crispEdges"><rect x="0.500" y="0.500" width="8" height="8" fill="#fff" stroke="#808080"/><rect x="2" y="4" width="5" height="1" fill="#000"/><rect x="4" y="2" width="1" height="5" fill="#000"/></svg><svg style="left:121px;top:264px" width="11" height="11" viewBox="0 0 11 11" shape-rendering="crispEdges"><rect x="0" y="0" width="11" height="11" fill="#e6e0d8"/><path d="M0 0h11v1H1v10H0z" fill="#848484"/><rect x="1" y="1" width="9" height="9" fill="#fff"/></svg><svg style="left:136px;top:263px" width="15" height="13" viewBox="0 0 15 13" shape-rendering="crispEdges"><path d="M2 0h5v1h1v1h6v10H0V2h1V1h1z" fill="#84848c"/><path d="M2 1h5v1h1v1h5v8H1V2h1z" fill="url(#yd)"/><path d="M2 1h5v1H2z M1 2h1v1H1z" fill="#ffffd8"/><path d="M14 3h1v10H1v-1h13z" fill="#000"/></svg><span style="left:157.70px;top:259px;font:12px/20px 'Liberation Sans',sans-serif;color:#000;transform:scaleX(0.9548);transform-origin:0 0;-webkit-text-stroke:0.22px #000;">boot</span><div style="left:109px;top:286px;width:6px;height:1px;background:repeating-linear-gradient(to right,#808080 0,#808080 1px,transparent 1px,transparent 2px);"></div><svg style="left:100px;top:282px" width="9" height="9" viewBox="0 0 9 9" shape-rendering="crispEdges"><rect x="0.500" y="0.500" width="8" height="8" fill="#fff" stroke="#808080"/><rect x="2" y="4" width="5" height="1" fill="#000"/><rect x="4" y="2" width="1" height="5" fill="#000"/></svg><svg style="left:121px;top:281px" width="11" height="11" viewBox="0 0 11 11" shape-rendering="crispEdges"><rect x="0" y="0" width="11" height="11" fill="#e6e0d8"/><path d="M0 0h11v1H1v10H0z" fill="#848484"/><rect x="1" y="1" width="9" height="9" fill="#fff"/></svg><svg style="left:136px;top:280px" width="15" height="13" viewBox="0 0 15 13" shape-rendering="crispEdges"><path d="M2 0h5v1h1v1h6v10H0V2h1V1h1z" fill="#84848c"/><path d="M2 1h5v1h1v1h5v8H1V2h1z" fill="url(#yd)"/><path d="M2 1h5v1H2z M1 2h1v1H1z" fill="#ffffd8"/><path d="M14 3h1v10H1v-1h13z" fill="#000"/></svg><span style="left:157.70px;top:276px;font:12px/20px 'Liberation Sans',sans-serif;color:#000;transform:scaleX(0.8938);transform-origin:0 0;-webkit-text-stroke:0.22px #000;">cdrom</span><div style="left:109px;top:303px;width:6px;height:1px;background:repeating-linear-gradient(to right,transparent 0,transparent 1px,#808080 1px,#808080 2px);"></div><svg style="left:100px;top:299px" width="9" height="9" viewBox="0 0 9 9" shape-rendering="crispEdges"><rect x="0.500" y="0.500" width="8" height="8" fill="#fff" stroke="#808080"/><rect x="2" y="4" width="5" height="1" fill="#000"/><rect x="4" y="2" width="1" height="5" fill="#000"/></svg><svg style="left:121px;top:298px" width="11" height="11" viewBox="0 0 11 11" shape-rendering="crispEdges"><rect x="0" y="0" width="11" height="11" fill="#e6e0d8"/><path d="M0 0h11v1H1v10H0z" fill="#848484"/><rect x="1" y="1" width="9" height="9" fill="#fff"/></svg><svg style="left:136px;top:297px" width="15" height="13" viewBox="0 0 15 13" shape-rendering="crispEdges"><path d="M2 0h5v1h1v1h6v10H0V2h1V1h1z" fill="#84848c"/><path d="M2 1h5v1h1v1h5v8H1V2h1z" fill="url(#yd)"/><path d="M2 1h5v1H2z M1 2h1v1H1z" fill="#ffffd8"/><path d="M14 3h1v10H1v-1h13z" fill="#000"/></svg><span style="left:157.70px;top:293px;font:12px/20px 'Liberation Sans',sans-serif;color:#000;transform:scaleX(0.9717);transform-origin:0 0;-webkit-text-stroke:0.22px #000;">dev</span><div style="left:109px;top:320px;width:6px;height:1px;background:repeating-linear-gradient(to right,#808080 0,#808080 1px,transparent 1px,transparent 2px);"></div><svg style="left:100px;top:316px" width="9" height="9" viewBox="0 0 9 9" shape-rendering="crispEdges"><rect x="0.500" y="0.500" width="8" height="8" fill="#fff" stroke="#808080"/><rect x="2" y="4" width="5" height="1" fill="#000"/><rect x="4" y="2" width="1" height="5" fill="#000"/></svg><svg style="left:121px;top:315px" width="11" height="11" viewBox="0 0 11 11" shape-rendering="crispEdges"><rect x="0" y="0" width="11" height="11" fill="#e6e0d8"/><path d="M0 0h11v1H1v10H0z" fill="#848484"/><rect x="1" y="1" width="9" height="9" fill="#fff"/></svg><svg style="left:136px;top:314px" width="15" height="13" viewBox="0 0 15 13" shape-rendering="crispEdges"><path d="M2 0h5v1h1v1h6v10H0V2h1V1h1z" fill="#84848c"/><path d="M2 1h5v1h1v1h5v8H1V2h1z" fill="url(#yd)"/><path d="M2 1h5v1H2z M1 2h1v1H1z" fill="#ffffd8"/><path d="M14 3h1v10H1v-1h13z" fill="#000"/></svg><span style="left:157.70px;top:310px;font:12px/20px 'Liberation Sans',sans-serif;color:#000;transform:scaleX(0.9745);transform-origin:0 0;-webkit-text-stroke:0.22px #000;">etc</span><div style="left:109px;top:337px;width:6px;height:1px;background:repeating-linear-gradient(to right,transparent 0,transparent 1px,#808080 1px,#808080 2px);"></div><svg style="left:100px;top:333px" width="9" height="9" viewBox="0 0 9 9" shape-rendering="crispEdges"><rect x="0.500" y="0.500" width="8" height="8" fill="#fff" stroke="#808080"/><rect x="2" y="4" width="5" height="1" fill="#000"/></svg><svg style="left:121px;top:332px" width="11" height="11" viewBox="0 0 11 11" shape-rendering="crispEdges"><rect x="0" y="0" width="11" height="11" fill="#e6e0d8"/><path d="M0 0h11v1H1v10H0z" fill="#848484"/><rect x="1" y="1" width="9" height="9" fill="#fff"/><path d="M2 4h1v1h1v1h1v-1h1v-1h1v-1h1v-1h1v3h-1v1h-1v1h-1v1h-1v1h-1v-1h-1v-1h-1z" fill="#808080"/></svg><svg style="left:136px;top:331px" width="15" height="13" viewBox="0 0 15 13" shape-rendering="crispEdges"><path d="M2 0h5v1h1v1h6v10H0V2h1V1h1z" fill="#84848c"/><path d="M2 1h5v1h1v1h5v8H1V2h1z" fill="url(#yd)"/><path d="M2 1h5v1H2z M1 2h1v1H1z" fill="#ffffd8"/><path d="M14 3h1v10H1v-1h13z" fill="#000"/></svg><span style="left:157.70px;top:327px;font:12px/20px 'Liberation Sans',sans-serif;color:#000;transform:scaleX(0.9095);transform-origin:0 0;-webkit-text-stroke:0.22px #000;">home</span><div style="left:51px;top:346px;width:1px;height:15px;background:repeating-linear-gradient(to bottom,#fff 0,#fff 1px,transparent 1px,transparent 2px);"></div><div style="left:105px;top:346px;width:1px;height:15px;background:repeating-linear-gradient(to bottom,#fff 0,#fff 1px,transparent 1px,transparent 2px);"></div><div style="left:123px;top:346px;width:1px;height:9px;background:repeating-linear-gradient(to bottom,#fff 0,#fff 1px,transparent 1px,transparent 2px);"></div><div style="left:127px;top:354px;width:6px;height:1px;background:repeating-linear-gradient(to right,#fff 0,#fff 1px,transparent 1px,transparent 2px);"></div><svg style="left:118px;top:350px" width="9" height="9" viewBox="0 0 9 9" shape-rendering="crispEdges"><rect x="0.500" y="0.500" width="8" height="8" fill="#fff" stroke="#808080"/><rect x="2" y="4" width="5" height="1" fill="#000"/><rect x="4" y="2" width="1" height="5" fill="#000"/></svg><svg style="left:139px;top:349px" width="11" height="11" viewBox="0 0 11 11" shape-rendering="crispEdges"><rect x="0" y="0" width="11" height="11" fill="#e6e0d8"/><path d="M0 0h11v1H1v10H0z" fill="#848484"/><rect x="1" y="1" width="9" height="9" fill="#fff"/><path d="M2 4h1v1h1v1h1v-1h1v-1h1v-1h1v-1h1v3h-1v1h-1v1h-1v1h-1v1h-1v-1h-1v-1h-1z" fill="#808080"/></svg><svg style="left:154px;top:348px" width="15" height="13" viewBox="0 0 15 13" shape-rendering="crispEdges"><path d="M2 0h5v1h1v1h6v10H0V2h1V1h1z" fill="#84848c"/><path d="M2 1h5v1h1v1h5v8H1V2h1z" fill="url(#yd)"/><path d="M2 1h5v1H2z M1 2h1v1H1z" fill="#ffffd8"/><path d="M14 3h1v10H1v-1h13z" fill="#000"/></svg><span style="left:175.70px;top:344px;font:12px/20px 'Liberation Sans',sans-serif;color:#fff;transform:scaleX(0.9342);transform-origin:0 0;-webkit-text-stroke:0.22px #fff;">pavel</span><div style="left:109px;top:371px;width:6px;height:1px;background:repeating-linear-gradient(to right,transparent 0,transparent 1px,#808080 1px,#808080 2px);"></div><svg style="left:100px;top:367px" width="9" height="9" viewBox="0 0 9 9" shape-rendering="crispEdges"><rect x="0.500" y="0.500" width="8" height="8" fill="#fff" stroke="#808080"/><rect x="2" y="4" width="5" height="1" fill="#000"/><rect x="4" y="2" width="1" height="5" fill="#000"/></svg><svg style="left:121px;top:366px" width="11" height="11" viewBox="0 0 11 11" shape-rendering="crispEdges"><rect x="0" y="0" width="11" height="11" fill="#e6e0d8"/><path d="M0 0h11v1H1v10H0z" fill="#848484"/><rect x="1" y="1" width="9" height="9" fill="#fff"/></svg><svg style="left:136px;top:365px" width="15" height="13" viewBox="0 0 15 13" shape-rendering="crispEdges"><path d="M2 0h5v1h1v1h6v10H0V2h1V1h1z" fill="#84848c"/><path d="M2 1h5v1h1v1h5v8H1V2h1z" fill="url(#yd)"/><path d="M2 1h5v1H2z M1 2h1v1H1z" fill="#ffffd8"/><path d="M14 3h1v10H1v-1h13z" fill="#000"/></svg><span style="left:157.70px;top:361px;font:12px/20px 'Liberation Sans',sans-serif;color:#000;transform:scaleX(0.8829);transform-origin:0 0;-webkit-text-stroke:0.22px #000;">lib</span><div style="left:109px;top:388px;width:6px;height:1px;background:repeating-linear-gradient(to right,#808080 0,#808080 1px,transparent 1px,transparent 2px);"></div><svg style="left:100px;top:384px" width="9" height="9" viewBox="0 0 9 9" shape-rendering="crispEdges"><rect x="0.500" y="0.500" width="8" height="8" fill="#fff" stroke="#808080"/><rect x="2" y="4" width="5" height="1" fill="#000"/><rect x="4" y="2" width="1" height="5" fill="#000"/></svg><svg style="left:121px;top:383px" width="11" height="11" viewBox="0 0 11 11" shape-rendering="crispEdges"><rect x="0" y="0" width="11" height="11" fill="#e6e0d8"/><path d="M0 0h11v1H1v10H0z" fill="#848484"/><rect x="1" y="1" width="9" height="9" fill="#fff"/></svg><svg style="left:136px;top:382px" width="15" height="13" viewBox="0 0 15 13" shape-rendering="crispEdges"><path d="M2 0h5v1h1v1h6v10H0V2h1V1h1z" fill="#84848c"/><path d="M2 1h5v1h1v1h5v8H1V2h1z" fill="url(#yd)"/><path d="M2 1h5v1H2z M1 2h1v1H1z" fill="#ffffd8"/><path d="M14 3h1v10H1v-1h13z" fill="#000"/></svg><span style="left:157.70px;top:378px;font:12px/20px 'Liberation Sans',sans-serif;color:#000;transform:scaleX(0.8914);transform-origin:0 0;-webkit-text-stroke:0.22px #000;">lib64</span><div style="left:109px;top:405px;width:6px;height:1px;background:repeating-linear-gradient(to right,transparent 0,transparent 1px,#808080 1px,#808080 2px);"></div><svg style="left:100px;top:401px" width="9" height="9" viewBox="0 0 9 9" shape-rendering="crispEdges"><rect x="0.500" y="0.500" width="8" height="8" fill="#fff" stroke="#808080"/><rect x="2" y="4" width="5" height="1" fill="#000"/><rect x="4" y="2" width="1" height="5" fill="#000"/></svg><svg style="left:121px;top:400px" width="11" height="11" viewBox="0 0 11 11" shape-rendering="crispEdges"><rect x="0" y="0" width="11" height="11" fill="#e6e0d8"/><path d="M0 0h11v1H1v10H0z" fill="#848484"/><rect x="1" y="1" width="9" height="9" fill="#fff"/></svg><svg style="left:136px;top:399px" width="15" height="13" viewBox="0 0 15 13" shape-rendering="crispEdges"><path d="M2 0h5v1h1v1h6v10H0V2h1V1h1z" fill="#84848c"/><path d="M2 1h5v1h1v1h5v8H1V2h1z" fill="url(#yd)"/><path d="M2 1h5v1H2z M1 2h1v1H1z" fill="#ffffd8"/><path d="M14 3h1v10H1v-1h13z" fill="#000"/></svg><span style="left:157.70px;top:395px;font:12px/20px 'Liberation Sans',sans-serif;color:#000;transform:scaleX(0.9029);transform-origin:0 0;-webkit-text-stroke:0.22px #000;">lost+found</span><div style="left:109px;top:422px;width:6px;height:1px;background:repeating-linear-gradient(to right,#808080 0,#808080 1px,transparent 1px,transparent 2px);"></div><svg style="left:100px;top:418px" width="9" height="9" viewBox="0 0 9 9" shape-rendering="crispEdges"><rect x="0.500" y="0.500" width="8" height="8" fill="#fff" stroke="#808080"/><rect x="2" y="4" width="5" height="1" fill="#000"/><rect x="4" y="2" width="1" height="5" fill="#000"/></svg><svg style="left:121px;top:417px" width="11" height="11" viewBox="0 0 11 11" shape-rendering="crispEdges"><rect x="0" y="0" width="11" height="11" fill="#e6e0d8"/><path d="M0 0h11v1H1v10H0z" fill="#848484"/><rect x="1" y="1" width="9" height="9" fill="#fff"/></svg><svg style="left:136px;top:416px" width="15" height="13" viewBox="0 0 15 13" shape-rendering="crispEdges"><path d="M2 0h5v1h1v1h6v10H0V2h1V1h1z" fill="#84848c"/><path d="M2 1h5v1h1v1h5v8H1V2h1z" fill="url(#yd)"/><path d="M2 1h5v1H2z M1 2h1v1H1z" fill="#ffffd8"/><path d="M14 3h1v10H1v-1h13z" fill="#000"/></svg><span style="left:157.70px;top:412px;font:12px/20px 'Liberation Sans',sans-serif;color:#000;transform:scaleX(0.8812);transform-origin:0 0;-webkit-text-stroke:0.22px #000;">media</span><div style="left:105px;top:439px;width:10px;height:1px;background:repeating-linear-gradient(to right,transparent 0,transparent 1px,#808080 1px,#808080 2px);"></div><svg style="left:121px;top:434px" width="11" height="11" viewBox="0 0 11 11" shape-rendering="crispEdges"><rect x="0" y="0" width="11" height="11" fill="#e6e0d8"/><path d="M0 0h11v1H1v10H0z" fill="#848484"/><rect x="1" y="1" width="9" height="9" fill="#fff"/></svg><svg style="left:136px;top:433px" width="15" height="13" viewBox="0 0 15 13" shape-rendering="crispEdges"><path d="M2 0h5v1h1v1h6v10H0V2h1V1h1z" fill="#84848c"/><path d="M2 1h5v1h1v1h5v8H1V2h1z" fill="url(#yd)"/><path d="M2 1h5v1H2z M1 2h1v1H1z" fill="#ffffd8"/><path d="M14 3h1v10H1v-1h13z" fill="#000"/></svg><span style="left:157.70px;top:429px;font:12px/20px 'Liberation Sans',sans-serif;color:#000;transform:scaleX(0.8898);transform-origin:0 0;-webkit-text-stroke:0.22px #000;">mnt</span><div style="left:105px;top:456px;width:10px;height:1px;background:repeating-linear-gradient(to right,#808080 0,#808080 1px,transparent 1px,transparent 2px);"></div><svg style="left:121px;top:451px" width="11" height="11" viewBox="0 0 11 11" shape-rendering="crispEdges"><rect x="0" y="0" width="11" height="11" fill="#e6e0d8"/><path d="M0 0h11v1H1v10H0z" fill="#848484"/><rect x="1" y="1" width="9" height="9" fill="#fff"/><path d="M2 4h1v1h1v1h1v-1h1v-1h1v-1h1v-1h1v3h-1v1h-1v1h-1v1h-1v1h-1v-1h-1v-1h-1z" fill="#808080"/></svg><svg style="left:136px;top:450px" width="15" height="13" viewBox="0 0 15 13" shape-rendering="crispEdges"><path d="M2 0h5v1h1v1h6v10H0V2h1V1h1z" fill="#84848c"/><path d="M2 1h5v1h1v1h5v8H1V2h1z" fill="url(#yd)"/><path d="M2 1h5v1H2z M1 2h1v1H1z" fill="#ffffd8"/><path d="M14 3h1v10H1v-1h13z" fill="#000"/></svg><span style="left:157.70px;top:446px;font:12px/20px 'Liberation Sans',sans-serif;color:#000;transform:scaleX(0.9352);transform-origin:0 0;-webkit-text-stroke:0.22px #000;">opt</span><div style="left:109px;top:473px;width:6px;height:1px;background:repeating-linear-gradient(to right,transparent 0,transparent 1px,#808080 1px,#808080 2px);"></div><svg style="left:100px;top:469px" width="9" height="9" viewBox="0 0 9 9" shape-rendering="crispEdges"><rect x="0.500" y="0.500" width="8" height="8" fill="#fff" stroke="#808080"/><rect x="2" y="4" width="5" height="1" fill="#000"/><rect x="4" y="2" width="1" height="5" fill="#000"/></svg><svg style="left:121px;top:468px" width="11" height="11" viewBox="0 0 11 11" shape-rendering="crispEdges"><rect x="0" y="0" width="11" height="11" fill="#e6e0d8"/><path d="M0 0h11v1H1v10H0z" fill="#848484"/><rect x="1" y="1" width="9" height="9" fill="#fff"/></svg><svg style="left:136px;top:467px" width="15" height="13" viewBox="0 0 15 13" shape-rendering="crispEdges"><path d="M2 0h5v1h1v1h6v10H0V2h1V1h1z" fill="#84848c"/><path d="M2 1h5v1h1v1h5v8H1V2h1z" fill="url(#yd)"/><path d="M2 1h5v1H2z M1 2h1v1H1z" fill="#ffffd8"/><path d="M14 3h1v10H1v-1h13z" fill="#000"/></svg><span style="left:157.70px;top:463px;font:12px/20px 'Liberation Sans',sans-serif;color:#000;transform:scaleX(0.9339);transform-origin:0 0;-webkit-text-stroke:0.22px #000;">proc</span><div style="left:109px;top:490px;width:6px;height:1px;background:repeating-linear-gradient(to right,#808080 0,#808080 1px,transparent 1px,transparent 2px);"></div><svg style="left:100px;top:486px" width="9" height="9" viewBox="0 0 9 9" shape-rendering="crispEdges"><rect x="0.500" y="0.500" width="8" height="8" fill="#fff" stroke="#808080"/><rect x="2" y="4" width="5" height="1" fill="#000"/><rect x="4" y="2" width="1" height="5" fill="#000"/></svg><svg style="left:121px;top:485px" width="11" height="11" viewBox="0 0 11 11" shape-rendering="crispEdges"><rect x="0" y="0" width="11" height="11" fill="#e6e0d8"/><path d="M0 0h11v1H1v10H0z" fill="#848484"/><rect x="1" y="1" width="9" height="9" fill="#fff"/></svg><svg style="left:136px;top:484px" width="15" height="13" viewBox="0 0 15 13" shape-rendering="crispEdges"><path d="M2 0h5v1h1v1h6v10H0V2h1V1h1z" fill="#84848c"/><path d="M2 1h5v1h1v1h5v8H1V2h1z" fill="url(#yd)"/><path d="M2 1h5v1H2z M1 2h1v1H1z" fill="#ffffd8"/><path d="M14 3h1v10H1v-1h13z" fill="#000"/></svg><span style="left:157.70px;top:480px;font:12px/20px 'Liberation Sans',sans-serif;color:#000;transform:scaleX(0.9092);transform-origin:0 0;-webkit-text-stroke:0.22px #000;">root</span><div style="left:109px;top:507px;width:6px;height:1px;background:repeating-linear-gradient(to right,transparent 0,transparent 1px,#808080 1px,#808080 2px);"></div><svg style="left:100px;top:503px" width="9" height="9" viewBox="0 0 9 9" shape-rendering="crispEdges"><rect x="0.500" y="0.500" width="8" height="8" fill="#fff" stroke="#808080"/><rect x="2" y="4" width="5" height="1" fill="#000"/><rect x="4" y="2" width="1" height="5" fill="#000"/></svg><svg style="left:121px;top:502px" width="11" height="11" viewBox="0 0 11 11" shape-rendering="crispEdges"><rect x="0" y="0" width="11" height="11" fill="#e6e0d8"/><path d="M0 0h11v1H1v10H0z" fill="#848484"/><rect x="1" y="1" width="9" height="9" fill="#fff"/></svg><svg style="left:136px;top:501px" width="15" height="13" viewBox="0 0 15 13" shape-rendering="crispEdges"><path d="M2 0h5v1h1v1h6v10H0V2h1V1h1z" fill="#84848c"/><path d="M2 1h5v1h1v1h5v8H1V2h1z" fill="url(#yd)"/><path d="M2 1h5v1H2z M1 2h1v1H1z" fill="#ffffd8"/><path d="M14 3h1v10H1v-1h13z" fill="#000"/></svg><span style="left:157.70px;top:497px;font:12px/20px 'Liberation Sans',sans-serif;color:#000;transform:scaleX(0.8995);transform-origin:0 0;-webkit-text-stroke:0.22px #000;">run</span><div style="left:109px;top:524px;width:6px;height:1px;background:repeating-linear-gradient(to right,#808080 0,#808080 1px,transparent 1px,transparent 2px);"></div><svg style="left:100px;top:520px" width="9" height="9" viewBox="0 0 9 9" shape-rendering="crispEdges"><rect x="0.500" y="0.500" width="8" height="8" fill="#fff" stroke="#808080"/><rect x="2" y="4" width="5" height="1" fill="#000"/><rect x="4" y="2" width="1" height="5" fill="#000"/></svg><svg style="left:121px;top:519px" width="11" height="11" viewBox="0 0 11 11" shape-rendering="crispEdges"><rect x="0" y="0" width="11" height="11" fill="#e6e0d8"/><path d="M0 0h11v1H1v10H0z" fill="#848484"/><rect x="1" y="1" width="9" height="9" fill="#fff"/></svg><svg style="left:136px;top:518px" width="15" height="13" viewBox="0 0 15 13" shape-rendering="crispEdges"><path d="M2 0h5v1h1v1h6v10H0V2h1V1h1z" fill="#84848c"/><path d="M2 1h5v1h1v1h5v8H1V2h1z" fill="url(#yd)"/><path d="M2 1h5v1H2z M1 2h1v1H1z" fill="#ffffd8"/><path d="M14 3h1v10H1v-1h13z" fill="#000"/></svg><span style="left:157.70px;top:514px;font:12px/20px 'Liberation Sans',sans-serif;color:#000;transform:scaleX(0.9131);transform-origin:0 0;-webkit-text-stroke:0.22px #000;">sbin</span><div style="left:109px;top:541px;width:6px;height:1px;background:repeating-linear-gradient(to right,transparent 0,transparent 1px,#808080 1px,#808080 2px);"></div><svg style="left:100px;top:537px" width="9" height="9" viewBox="0 0 9 9" shape-rendering="crispEdges"><rect x="0.500" y="0.500" width="8" height="8" fill="#fff" stroke="#808080"/><rect x="2" y="4" width="5" height="1" fill="#000"/><rect x="4" y="2" width="1" height="5" fill="#000"/></svg><svg style="left:121px;top:536px" width="11" height="11" viewBox="0 0 11 11" shape-rendering="crispEdges"><rect x="0" y="0" width="11" height="11" fill="#e6e0d8"/><path d="M0 0h11v1H1v10H0z" fill="#848484"/><rect x="1" y="1" width="9" height="9" fill="#fff"/></svg><svg style="left:136px;top:535px" width="15" height="13" viewBox="0 0 15 13" shape-rendering="crispEdges"><path d="M2 0h5v1h1v1h6v10H0V2h1V1h1z" fill="#84848c"/><path d="M2 1h5v1h1v1h5v8H1V2h1z" fill="url(#yd)"/><path d="M2 1h5v1H2z M1 2h1v1H1z" fill="#ffffd8"/><path d="M14 3h1v10H1v-1h13z" fill="#000"/></svg><span style="left:157.70px;top:531px;font:12px/20px 'Liberation Sans',sans-serif;color:#000;transform:scaleX(0.8861);transform-origin:0 0;-webkit-text-stroke:0.22px #000;">selinux</span><div style="left:109px;top:558px;width:6px;height:1px;background:repeating-linear-gradient(to right,#808080 0,#808080 1px,transparent 1px,transparent 2px);"></div><svg style="left:100px;top:554px" width="9" height="9" viewBox="0 0 9 9" shape-rendering="crispEdges"><rect x="0.500" y="0.500" width="8" height="8" fill="#fff" stroke="#808080"/><rect x="2" y="4" width="5" height="1" fill="#000"/><rect x="4" y="2" width="1" height="5" fill="#000"/></svg><svg style="left:121px;top:553px" width="11" height="11" viewBox="0 0 11 11" shape-rendering="crispEdges"><rect x="0" y="0" width="11" height="11" fill="#e6e0d8"/><path d="M0 0h11v1H1v10H0z" fill="#848484"/><rect x="1" y="1" width="9" height="9" fill="#fff"/></svg><svg style="left:136px;top:552px" width="15" height="13" viewBox="0 0 15 13" shape-rendering="crispEdges"><path d="M2 0h5v1h1v1h6v10H0V2h1V1h1z" fill="#84848c"/><path d="M2 1h5v1h1v1h5v8H1V2h1z" fill="url(#yd)"/><path d="M2 1h5v1H2z M1 2h1v1H1z" fill="#ffffd8"/><path d="M14 3h1v10H1v-1h13z" fill="#000"/></svg><span style="left:157.70px;top:548px;font:12px/20px 'Liberation Sans',sans-serif;color:#000;transform:scaleX(0.9127);transform-origin:0 0;-webkit-text-stroke:0.22px #000;">srv</span><div style="left:109px;top:575px;width:6px;height:1px;background:repeating-linear-gradient(to right,transparent 0,transparent 1px,#808080 1px,#808080 2px);"></div><svg style="left:100px;top:571px" width="9" height="9" viewBox="0 0 9 9" shape-rendering="crispEdges"><rect x="0.500" y="0.500" width="8" height="8" fill="#fff" stroke="#808080"/><rect x="2" y="4" width="5" height="1" fill="#000"/><rect x="4" y="2" width="1" height="5" fill="#000"/></svg><svg style="left:121px;top:570px" width="11" height="11" viewBox="0 0 11 11" shape-rendering="crispEdges"><rect x="0" y="0" width="11" height="11" fill="#e6e0d8"/><path d="M0 0h11v1H1v10H0z" fill="#848484"/><rect x="1" y="1" width="9" height="9" fill="#fff"/></svg><svg style="left:136px;top:569px" width="15" height="13" viewBox="0 0 15 13" shape-rendering="crispEdges"><path d="M2 0h5v1h1v1h6v10H0V2h1V1h1z" fill="#84848c"/><path d="M2 1h5v1h1v1h5v8H1V2h1z" fill="url(#yd)"/><path d="M2 1h5v1H2z M1 2h1v1H1z" fill="#ffffd8"/><path d="M14 3h1v10H1v-1h13z" fill="#000"/></svg><span style="left:157.70px;top:565px;font:12px/20px 'Liberation Sans',sans-serif;color:#000;transform:scaleX(0.8667);transform-origin:0 0;-webkit-text-stroke:0.22px #000;">sys</span><div style="left:109px;top:592px;width:6px;height:1px;background:repeating-linear-gradient(to right,#808080 0,#808080 1px,transparent 1px,transparent 2px);"></div><svg style="left:100px;top:588px" width="9" height="9" viewBox="0 0 9 9" shape-rendering="crispEdges"><rect x="0.500" y="0.500" width="8" height="8" fill="#fff" stroke="#808080"/><rect x="2" y="4" width="5" height="1" fill="#000"/><rect x="4" y="2" width="1" height="5" fill="#000"/></svg><svg style="left:121px;top:587px" width="11" height="11" viewBox="0 0 11 11" shape-rendering="crispEdges"><rect x="0" y="0" width="11" height="11" fill="#e6e0d8"/><path d="M0 0h11v1H1v10H0z" fill="#848484"/><rect x="1" y="1" width="9" height="9" fill="#fff"/></svg><svg style="left:136px;top:586px" width="15" height="13" viewBox="0 0 15 13" shape-rendering="crispEdges"><path d="M2 0h5v1h1v1h6v10H0V2h1V1h1z" fill="#84848c"/><path d="M2 1h5v1h1v1h5v8H1V2h1z" fill="url(#yd)"/><path d="M2 1h5v1H2z M1 2h1v1H1z" fill="#ffffd8"/><path d="M14 3h1v10H1v-1h13z" fill="#000"/></svg><span style="left:157.70px;top:582px;font:12px/20px 'Liberation Sans',sans-serif;color:#000;transform:scaleX(0.8898);transform-origin:0 0;-webkit-text-stroke:0.22px #000;">tmp</span><div style="left:109px;top:609px;width:6px;height:1px;background:repeating-linear-gradient(to right,transparent 0,transparent 1px,#808080 1px,#808080 2px);"></div><svg style="left:100px;top:605px" width="9" height="9" viewBox="0 0 9 9" shape-rendering="crispEdges"><rect x="0.500" y="0.500" width="8" height="8" fill="#fff" stroke="#808080"/><rect x="2" y="4" width="5" height="1" fill="#000"/><rect x="4" y="2" width="1" height="5" fill="#000"/></svg><svg style="left:121px;top:604px" width="11" height="11" viewBox="0 0 11 11" shape-rendering="crispEdges"><rect x="0" y="0" width="11" height="11" fill="#e6e0d8"/><path d="M0 0h11v1H1v10H0z" fill="#848484"/><rect x="1" y="1" width="9" height="9" fill="#fff"/></svg><svg style="left:136px;top:603px" width="15" height="13" viewBox="0 0 15 13" shape-rendering="crispEdges"><path d="M2 0h5v1h1v1h6v10H0V2h1V1h1z" fill="#84848c"/><path d="M2 1h5v1h1v1h5v8H1V2h1z" fill="url(#yd)"/><path d="M2 1h5v1H2z M1 2h1v1H1z" fill="#ffffd8"/><path d="M14 3h1v10H1v-1h13z" fill="#000"/></svg><span style="left:157.70px;top:599px;font:12px/20px 'Liberation Sans',sans-serif;color:#000;transform:scaleX(0.8758);transform-origin:0 0;-webkit-text-stroke:0.22px #000;">usr</span><div style="left:109px;top:626px;width:6px;height:1px;background:repeating-linear-gradient(to right,#808080 0,#808080 1px,transparent 1px,transparent 2px);"></div><svg style="left:100px;top:622px" width="9" height="9" viewBox="0 0 9 9" shape-rendering="crispEdges"><rect x="0.500" y="0.500" width="8" height="8" fill="#fff" stroke="#808080"/><rect x="2" y="4" width="5" height="1" fill="#000"/><rect x="4" y="2" width="1" height="5" fill="#000"/></svg><svg style="left:121px;top:621px" width="11" height="11" viewBox="0 0 11 11" shape-rendering="crispEdges"><rect x="0" y="0" width="11" height="11" fill="#e6e0d8"/><path d="M0 0h11v1H1v10H0z" fill="#848484"/><rect x="1" y="1" width="9" height="9" fill="#fff"/></svg><svg style="left:136px;top:620px" width="15" height="13" viewBox="0 0 15 13" shape-rendering="crispEdges"><path d="M2 0h5v1h1v1h6v10H0V2h1V1h1z" fill="#84848c"/><path d="M2 1h5v1h1v1h5v8H1V2h1z" fill="url(#yd)"/><path d="M2 1h5v1H2z M1 2h1v1H1z" fill="#ffffd8"/><path d="M14 3h1v10H1v-1h13z" fill="#000"/></svg><span style="left:157.70px;top:616px;font:12px/20px 'Liberation Sans',sans-serif;color:#000;transform:scaleX(0.9358);transform-origin:0 0;-webkit-text-stroke:0.22px #000;">var</span><div style="left:55px;top:643px;width:6px;height:1px;background:repeating-linear-gradient(to right,transparent 0,transparent 1px,#808080 1px,#808080 2px);"></div><svg style="left:46px;top:639px" width="9" height="9" viewBox="0 0 9 9" shape-rendering="crispEdges"><rect x="0.500" y="0.500" width="8" height="8" fill="#fff" stroke="#808080"/><rect x="2" y="4" width="5" height="1" fill="#000"/><rect x="4" y="2" width="1" height="5" fill="#000"/></svg><svg style="left:67px;top:638px" width="11" height="11" viewBox="0 0 11 11" shape-rendering="crispEdges"><rect x="0" y="0" width="11" height="11" fill="#e6e0d8"/><path d="M0 0h11v1H1v10H0z" fill="#848484"/><rect x="1" y="1" width="9" height="9" fill="#fff"/></svg><svg style="left:82px;top:640px" width="16" height="9" viewBox="0 0 16 9" shape-rendering="crispEdges"><path d="M2 0h13l1 1v6l-2 2H0V3z" fill="#808080"/><path d="M3 1h12l-2 2H1z" fill="#e8e8e8"/><path d="M1 3h12v5H1z" fill="#c4c4c4"/><path d="M14 2l1-1v6l-1 1z" fill="#606060"/><path d="M0 8h14l2-2v1l-2 2H0z" fill="#000"/><path d="M3 4h3v1H4v1h2v1H4v0h0v1h2v0H3z M3 7h3v1H3z M7 4h1v1h1v1h1V5h1V4h1v1h-1v1h-1v1h1v1h-1V7H9v1H7V7h1V6h1V6H8V5H7z" fill="#f00000"/><rect x="12" y="3" width="1" height="1" fill="#00a000"/></svg><span style="left:103.70px;top:633px;font:12px/20px 'Liberation Sans',sans-serif;color:#000;transform:scaleX(0.9134);transform-origin:0 0;-webkit-text-stroke:0.22px #000;">4 [05] FAT16 Extended</span><div style="left:523px;top:96px;width:17px;height:17px;background:#d4d0c8;box-sizing:border-box;border-top:1px solid #fff;border-left:1px solid #fff;border-right:1px solid #808080;border-bottom:1px solid #808080;"></div><div style="left:540px;top:96px;width:331px;height:17px;background:#d4d0c8;box-sizing:border-box;border-top:1px solid #fff;border-left:1px solid #fff;border-right:1px solid #808080;border-bottom:1px solid #808080;"></div><div style="left:871px;top:96px;width:40px;height:17px;background:#d4d0c8;box-sizing:border-box;border-top:1px solid #fff;border-left:1px solid #fff;border-right:1px solid #808080;border-bottom:1px solid #808080;"></div><div style="left:911px;top:96px;width:80px;height:17px;background:#d4d0c8;box-sizing:border-box;border-top:1px solid #fff;border-left:1px solid #fff;border-right:1px solid #808080;border-bottom:1px solid #808080;"></div><div style="left:991px;top:96px;width:80px;height:17px;background:#d4d0c8;box-sizing:border-box;border-top:1px solid #fff;border-left:1px solid #fff;border-right:1px solid #808080;border-bottom:1px solid #808080;"></div><div style="left:1071px;top:96px;width:67px;height:17px;background:#d4d0c8;box-sizing:border-box;border-top:1px solid #fff;border-left:1px solid #fff;border-bottom:1px solid #808080;"></div><span style="left:542.00px;top:96px;font:12px/20px 'Liberation Sans',sans-serif;color:#000;transform:scaleX(0.8935);transform-origin:0 0;-webkit-text-stroke:0.22px #000;">Name</span><span style="left:879.60px;top:96px;font:12px/20px 'Liberation Sans',sans-serif;color:#000;transform:scaleX(0.9228);transform-origin:0 0;-webkit-text-stroke:0.22px #000;">Ext</span><span style="left:964.60px;top:96px;font:12px/20px 'Liberation Sans',sans-serif;color:#000;transform:scaleX(0.9076);transform-origin:0 0;-webkit-text-stroke:0.22px #000;">Start</span><span style="left:1039.10px;top:96px;font:12px/20px 'Liberation Sans',sans-serif;color:#000;transform:scaleX(0.8901);transform-origin:0 0;-webkit-text-stroke:0.22px #000;">Offset</span><svg style="left:580px;top:101px" width="10" height="8" viewBox="0 0 10 8"><path d="M0.500 7.500 L4.500 0.500" stroke="#808080" fill="none"/><path d="M4.500 0.500 L8.500 7.500 M0.500 7.500 H8.500" stroke="#fff" fill="none"/></svg><div style="left:523px;top:113px;width:16px;height:679px;background:#dedede;"></div><div style="left:540px;top:113px;width:330px;height:679px;background:#f5f5f5;"></div><div style="left:523px;top:113px;width:615px;height:16px;background:#d4d0c8;"></div><div style="left:523px;top:129px;width:615px;height:1px;background:repeating-linear-gradient(to right,#fff 0,#fff 1px,#d4d0c8 1px,#d4d0c8 2px);"></div><div style="left:523px;top:146px;width:615px;height:1px;background:repeating-linear-gradient(to right,#d4d0c8 0,#d4d0c8 1px,#fff 1px,#fff 2px);"></div><div style="left:523px;top:163px;width:615px;height:1px;background:repeating-linear-gradient(to right,#fff 0,#fff 1px,#d4d0c8 1px,#d4d0c8 2px);"></div><div style="left:523px;top:180px;width:615px;height:1px;background:repeating-linear-gradient(to right,#d4d0c8 0,#d4d0c8 1px,#fff 1px,#fff 2px);"></div><div style="left:523px;top:197px;width:615px;height:1px;background:repeating-linear-gradient(to right,#fff 0,#fff 1px,#d4d0c8 1px,#d4d0c8 2px);"></div><div style="left:523px;top:214px;width:615px;height:1px;background:repeating-linear-gradient(to right,#d4d0c8 0,#d4d0c8 1px,#fff 1px,#fff 2px);"></div><div style="left:523px;top:231px;width:615px;height:1px;background:repeating-linear-gradient(to right,#fff 0,#fff 1px,#d4d0c8 1px,#d4d0c8 2px);"></div><div style="left:523px;top:248px;width:615px;height:1px;background:repeating-linear-gradient(to right,#d4d0c8 0,#d4d0c8 1px,#fff 1px,#fff 2px);"></div><div style="left:523px;top:265px;width:615px;height:1px;background:repeating-linear-gradient(to right,#fff 0,#fff 1px,#d4d0c8 1px,#d4d0c8 2px);"></div><div style="left:523px;top:282px;width:615px;height:1px;background:repeating-linear-gradient(to right,#d4d0c8 0,#d4d0c8 1px,#fff 1px,#fff 2px);"></div><div style="left:523px;top:299px;width:615px;height:1px;background:repeating-linear-gradient(to right,#fff 0,#fff 1px,#d4d0c8 1px,#d4d0c8 2px);"></div><div style="left:523px;top:316px;width:615px;height:1px;background:repeating-linear-gradient(to right,#d4d0c8 0,#d4d0c8 1px,#fff 1px,#fff 2px);"></div><div style="left:523px;top:333px;width:615px;height:1px;background:repeating-linear-gradient(to right,#fff 0,#fff 1px,#d4d0c8 1px,#d4d0c8 2px);"></div><div style="left:523px;top:350px;width:615px;height:1px;background:repeating-linear-gradient(to right,#d4d0c8 0,#d4d0c8 1px,#fff 1px,#fff 2px);"></div><div style="left:523px;top:367px;width:615px;height:1px;background:repeating-linear-gradient(to right,#fff 0,#fff 1px,#d4d0c8 1px,#d4d0c8 2px);"></div><div style="left:523px;top:384px;width:615px;height:1px;background:repeating-linear-gradient(to right,#d4d0c8 0,#d4d0c8 1px,#fff 1px,#fff 2px);"></div><div style="left:523px;top:401px;width:615px;height:1px;background:repeating-linear-gradient(to right,#fff 0,#fff 1px,#d4d0c8 1px,#d4d0c8 2px);"></div><div style="left:523px;top:418px;width:615px;height:1px;background:repeating-linear-gradient(to right,#d4d0c8 0,#d4d0c8 1px,#fff 1px,#fff 2px);"></div><div style="left:523px;top:435px;width:615px;height:1px;background:repeating-linear-gradient(to right,#fff 0,#fff 1px,#d4d0c8 1px,#d4d0c8 2px);"></div><div style="left:523px;top:452px;width:615px;height:1px;background:repeating-linear-gradient(to right,#d4d0c8 0,#d4d0c8 1px,#fff 1px,#fff 2px);"></div><div style="left:523px;top:469px;width:615px;height:1px;background:repeating-linear-gradient(to right,#fff 0,#fff 1px,#d4d0c8 1px,#d4d0c8 2px);"></div><div style="left:523px;top:486px;width:615px;height:1px;background:repeating-linear-gradient(to right,#d4d0c8 0,#d4d0c8 1px,#fff 1px,#fff 2px);"></div><div style="left:523px;top:503px;width:615px;height:1px;background:repeating-linear-gradient(to right,#fff 0,#fff 1px,#d4d0c8 1px,#d4d0c8 2px);"></div><div style="left:523px;top:520px;width:615px;height:1px;background:repeating-linear-gradient(to right,#d4d0c8 0,#d4d0c8 1px,#fff 1px,#fff 2px);"></div><div style="left:523px;top:537px;width:615px;height:1px;background:repeating-linear-gradient(to right,#fff 0,#fff 1px,#d4d0c8 1px,#d4d0c8 2px);"></div><div style="left:523px;top:554px;width:615px;height:1px;background:repeating-linear-gradient(to right,#d4d0c8 0,#d4d0c8 1px,#fff 1px,#fff 2px);"></div><div style="left:523px;top:571px;width:615px;height:1px;background:repeating-linear-gradient(to right,#fff 0,#fff 1px,#d4d0c8 1px,#d4d0c8 2px);"></div><div style="left:523px;top:588px;width:615px;height:1px;background:repeating-linear-gradient(to right,#d4d0c8 0,#d4d0c8 1px,#fff 1px,#fff 2px);"></div><div style="left:523px;top:605px;width:615px;height:1px;background:repeating-linear-gradient(to right,#fff 0,#fff 1px,#d4d0c8 1px,#d4d0c8 2px);"></div><div style="left:539px;top:113px;width:1px;height:493px;background:repeating-linear-gradient(to bottom,#fff 0,#fff 1px,#d4d0c8 1px,#d4d0c8 2px);"></div><div style="left:870px;top:113px;width:1px;height:493px;background:repeating-linear-gradient(to bottom,#d4d0c8 0,#d4d0c8 1px,#fff 1px,#fff 2px);"></div><div style="left:910px;top:113px;width:1px;height:493px;background:repeating-linear-gradient(to bottom,#d4d0c8 0,#d4d0c8 1px,#fff 1px,#fff 2px);"></div><div style="left:990px;top:113px;width:1px;height:493px;background:repeating-linear-gradient(to bottom,#d4d0c8 0,#d4d0c8 1px,#fff 1px,#fff 2px);"></div><div style="left:1070px;top:113px;width:1px;height:493px;background:repeating-linear-gradient(to bottom,#d4d0c8 0,#d4d0c8 1px,#fff 1px,#fff 2px);"></div><svg style="left:547px;top:117px" width="11" height="11" viewBox="0 0 11 11" shape-rendering="crispEdges"><rect x="0" y="0" width="11" height="11" fill="#e6e0d8"/><path d="M0 0h11v1H1v10H0z" fill="#848484"/><rect x="1" y="1" width="9" height="9" fill="#fff"/><path d="M2 4h1v1h1v1h1v-1h1v-1h1v-1h1v-1h1v3h-1v1h-1v1h-1v1h-1v1h-1v-1h-1v-1h-1z" fill="#808080"/></svg><svg style="left:562px;top:116px" width="15" height="13" viewBox="0 0 15 13" shape-rendering="crispEdges"><path d="M2 0h5v1h1v1h6v10H0V2h1V1h1z" fill="#84848c"/><path d="M2 1h5v1h1v1h5v8H1V2h1z" fill="url(#yd)"/><path d="M2 1h5v1H2z M1 2h1v1H1z" fill="#ffffd8"/><path d="M14 3h1v10H1v-1h13z" fill="#000"/></svg><span style="left:583.90px;top:111px;font:12px/20px 'Liberation Sans',sans-serif;color:#000;transform:scaleX(0.9588);transform-origin:0 0;-webkit-text-stroke:0.22px #000;">.cache</span><span style="left:925.90px;top:111px;font:12px/20px 'Liberation Sans',sans-serif;color:#000;transform:scaleX(0.9186);transform-origin:0 0;-webkit-text-stroke:0.22px #000;">149 682 488</span><span style="left:1005.90px;top:111px;font:12px/20px 'Liberation Sans',sans-serif;color:#000;transform:scaleX(0.9186);transform-origin:0 0;-webkit-text-stroke:0.22px #000;">142 672 184</span><svg style="left:547px;top:134px" width="11" height="11" viewBox="0 0 11 11" shape-rendering="crispEdges"><rect x="0" y="0" width="11" height="11" fill="#e6e0d8"/><path d="M0 0h11v1H1v10H0z" fill="#848484"/><rect x="1" y="1" width="9" height="9" fill="#fff"/><path d="M2 4h1v1h1v1h1v-1h1v-1h1v-1h1v-1h1v3h-1v1h-1v1h-1v1h-1v1h-1v-1h-1v-1h-1z" fill="#808080"/></svg><svg style="left:562px;top:133px" width="15" height="13" viewBox="0 0 15 13" shape-rendering="crispEdges"><path d="M2 0h5v1h1v1h6v10H0V2h1V1h1z" fill="#84848c"/><path d="M2 1h5v1h1v1h5v8H1V2h1z" fill="url(#yd)"/><path d="M2 1h5v1H2z M1 2h1v1H1z" fill="#ffffd8"/><path d="M14 3h1v10H1v-1h13z" fill="#000"/></svg><span style="left:583.90px;top:128px;font:12px/20px 'Liberation Sans',sans-serif;color:#000;transform:scaleX(0.9022);transform-origin:0 0;-webkit-text-stroke:0.22px #000;">.compiz</span><span style="left:925.90px;top:128px;font:12px/20px 'Liberation Sans',sans-serif;color:#000;transform:scaleX(0.9186);transform-origin:0 0;-webkit-text-stroke:0.22px #000;">149 682 920</span><span style="left:1005.90px;top:128px;font:12px/20px 'Liberation Sans',sans-serif;color:#000;transform:scaleX(0.9186);transform-origin:0 0;-webkit-text-stroke:0.22px #000;">142 672 616</span><svg style="left:547px;top:151px" width="11" height="11" viewBox="0 0 11 11" shape-rendering="crispEdges"><rect x="0" y="0" width="11" height="11" fill="#e6e0d8"/><path d="M0 0h11v1H1v10H0z" fill="#848484"/><rect x="1" y="1" width="9" height="9" fill="#fff"/><path d="M2 4h1v1h1v1h1v-1h1v-1h1v-1h1v-1h1v3h-1v1h-1v1h-1v1h-1v1h-1v-1h-1v-1h-1z" fill="#808080"/></svg><svg style="left:562px;top:150px" width="15" height="13" viewBox="0 0 15 13" shape-rendering="crispEdges"><path d="M2 0h5v1h1v1h6v10H0V2h1V1h1z" fill="#84848c"/><path d="M2 1h5v1h1v1h5v8H1V2h1z" fill="url(#yd)"/><path d="M2 1h5v1H2z M1 2h1v1H1z" fill="#ffffd8"/><path d="M14 3h1v10H1v-1h13z" fill="#000"/></svg><span style="left:583.90px;top:145px;font:12px/20px 'Liberation Sans',sans-serif;color:#000;transform:scaleX(0.9419);transform-origin:0 0;-webkit-text-stroke:0.22px #000;">.config</span><span style="left:925.90px;top:145px;font:12px/20px 'Liberation Sans',sans-serif;color:#000;transform:scaleX(0.9186);transform-origin:0 0;-webkit-text-stroke:0.22px #000;">149 682 480</span><span style="left:1005.90px;top:145px;font:12px/20px 'Liberation Sans',sans-serif;color:#000;transform:scaleX(0.9186);transform-origin:0 0;-webkit-text-stroke:0.22px #000;">142 672 176</span><svg style="left:547px;top:168px" width="11" height="11" viewBox="0 0 11 11" shape-rendering="crispEdges"><rect x="0" y="0" width="11" height="11" fill="#e6e0d8"/><path d="M0 0h11v1H1v10H0z" fill="#848484"/><rect x="1" y="1" width="9" height="9" fill="#fff"/><path d="M2 4h1v1h1v1h1v-1h1v-1h1v-1h1v-1h1v3h-1v1h-1v1h-1v1h-1v1h-1v-1h-1v-1h-1z" fill="#808080"/></svg><svg style="left:562px;top:167px" width="15" height="13" viewBox="0 0 15 13" shape-rendering="crispEdges"><path d="M2 0h5v1h1v1h6v10H0V2h1V1h1z" fill="#84848c"/><path d="M2 1h5v1h1v1h5v8H1V2h1z" fill="url(#yd)"/><path d="M2 1h5v1H2z M1 2h1v1H1z" fill="#ffffd8"/><path d="M14 3h1v10H1v-1h13z" fill="#000"/></svg><span style="left:583.90px;top:162px;font:12px/20px 'Liberation Sans',sans-serif;color:#000;transform:scaleX(0.9164);transform-origin:0 0;-webkit-text-stroke:0.22px #000;">.dbus</span><span style="left:925.90px;top:162px;font:12px/20px 'Liberation Sans',sans-serif;color:#000;transform:scaleX(0.9186);transform-origin:0 0;-webkit-text-stroke:0.22px #000;">149 682 728</span><span style="left:1005.90px;top:162px;font:12px/20px 'Liberation Sans',sans-serif;color:#000;transform:scaleX(0.9186);transform-origin:0 0;-webkit-text-stroke:0.22px #000;">142 672 424</span><svg style="left:547px;top:185px" width="11" height="11" viewBox="0 0 11 11" shape-rendering="crispEdges"><rect x="0" y="0" width="11" height="11" fill="#e6e0d8"/><path d="M0 0h11v1H1v10H0z" fill="#848484"/><rect x="1" y="1" width="9" height="9" fill="#fff"/><path d="M2 4h1v1h1v1h1v-1h1v-1h1v-1h1v-1h1v3h-1v1h-1v1h-1v1h-1v1h-1v-1h-1v-1h-1z" fill="#808080"/></svg><svg style="left:562px;top:184px" width="15" height="13" viewBox="0 0 15 13" shape-rendering="crispEdges"><path d="M2 0h5v1h1v1h6v10H0V2h1V1h1z" fill="#84848c"/><path d="M2 1h5v1h1v1h5v8H1V2h1z" fill="url(#yd)"/><path d="M2 1h5v1H2z M1 2h1v1H1z" fill="#ffffd8"/><path d="M14 3h1v10H1v-1h13z" fill="#000"/></svg><span style="left:583.90px;top:179px;font:12px/20px 'Liberation Sans',sans-serif;color:#000;transform:scaleX(0.9453);transform-origin:0 0;-webkit-text-stroke:0.22px #000;">.gconf</span><span style="left:925.90px;top:179px;font:12px/20px 'Liberation Sans',sans-serif;color:#000;transform:scaleX(0.9186);transform-origin:0 0;-webkit-text-stroke:0.22px #000;">149 682 504</span><span style="left:1005.90px;top:179px;font:12px/20px 'Liberation Sans',sans-serif;color:#000;transform:scaleX(0.9186);transform-origin:0 0;-webkit-text-stroke:0.22px #000;">142 672 200</span><svg style="left:547px;top:202px" width="11" height="11" viewBox="0 0 11 11" shape-rendering="crispEdges"><rect x="0" y="0" width="11" height="11" fill="#e6e0d8"/><path d="M0 0h11v1H1v10H0z" fill="#848484"/><rect x="1" y="1" width="9" height="9" fill="#fff"/><path d="M2 4h1v1h1v1h1v-1h1v-1h1v-1h1v-1h1v3h-1v1h-1v1h-1v1h-1v1h-1v-1h-1v-1h-1z" fill="#808080"/></svg><svg style="left:562px;top:201px" width="15" height="13" viewBox="0 0 15 13" shape-rendering="crispEdges"><path d="M2 0h5v1h1v1h6v10H0V2h1V1h1z" fill="#84848c"/><path d="M2 1h5v1h1v1h5v8H1V2h1z" fill="url(#yd)"/><path d="M2 1h5v1H2z M1 2h1v1H1z" fill="#ffffd8"/><path d="M14 3h1v10H1v-1h13z" fill="#000"/></svg><span style="left:583.90px;top:196px;font:12px/20px 'Liberation Sans',sans-serif;color:#000;transform:scaleX(0.9015);transform-origin:0 0;-webkit-text-stroke:0.22px #000;">.gnome2</span><span style="left:925.90px;top:196px;font:12px/20px 'Liberation Sans',sans-serif;color:#000;transform:scaleX(0.9186);transform-origin:0 0;-webkit-text-stroke:0.22px #000;">149 682 512</span><span style="left:1005.90px;top:196px;font:12px/20px 'Liberation Sans',sans-serif;color:#000;transform:scaleX(0.9186);transform-origin:0 0;-webkit-text-stroke:0.22px #000;">142 672 208</span><svg style="left:547px;top:219px" width="11" height="11" viewBox="0 0 11 11" shape-rendering="crispEdges"><rect x="0" y="0" width="11" height="11" fill="#e6e0d8"/><path d="M0 0h11v1H1v10H0z" fill="#848484"/><rect x="1" y="1" width="9" height="9" fill="#fff"/><path d="M2 4h1v1h1v1h1v-1h1v-1h1v-1h1v-1h1v3h-1v1h-1v1h-1v1h-1v1h-1v-1h-1v-1h-1z" fill="#808080"/></svg><svg style="left:562px;top:218px" width="15" height="13" viewBox="0 0 15 13" shape-rendering="crispEdges"><path d="M2 0h5v1h1v1h6v10H0V2h1V1h1z" fill="#84848c"/><path d="M2 1h5v1h1v1h5v8H1V2h1z" fill="url(#yd)"/><path d="M2 1h5v1H2z M1 2h1v1H1z" fill="#ffffd8"/><path d="M14 3h1v10H1v-1h13z" fill="#000"/></svg><span style="left:583.90px;top:213px;font:12px/20px 'Liberation Sans',sans-serif;color:#000;transform:scaleX(0.9510);transform-origin:0 0;-webkit-text-stroke:0.22px #000;">.gvfs</span><span style="left:925.90px;top:213px;font:12px/20px 'Liberation Sans',sans-serif;color:#000;transform:scaleX(0.9186);transform-origin:0 0;-webkit-text-stroke:0.22px #000;">149 682 544</span><span style="left:1005.90px;top:213px;font:12px/20px 'Liberation Sans',sans-serif;color:#000;transform:scaleX(0.9186);transform-origin:0 0;-webkit-text-stroke:0.22px #000;">142 672 240</span><svg style="left:547px;top:236px" width="11" height="11" viewBox="0 0 11 11" shape-rendering="crispEdges"><rect x="0" y="0" width="11" height="11" fill="#e6e0d8"/><path d="M0 0h11v1H1v10H0z" fill="#848484"/><rect x="1" y="1" width="9" height="9" fill="#fff"/><path d="M2 4h1v1h1v1h1v-1h1v-1h1v-1h1v-1h1v3h-1v1h-1v1h-1v1h-1v1h-1v-1h-1v-1h-1z" fill="#808080"/></svg><svg style="left:562px;top:235px" width="15" height="13" viewBox="0 0 15 13" shape-rendering="crispEdges"><path d="M2 0h5v1h1v1h6v10H0V2h1V1h1z" fill="#84848c"/><path d="M2 1h5v1h1v1h5v8H1V2h1z" fill="url(#yd)"/><path d="M2 1h5v1H2z M1 2h1v1H1z" fill="#ffffd8"/><path d="M14 3h1v10H1v-1h13z" fill="#000"/></svg><span style="left:583.90px;top:230px;font:12px/20px 'Liberation Sans',sans-serif;color:#000;transform:scaleX(0.9317);transform-origin:0 0;-webkit-text-stroke:0.22px #000;">.local</span><span style="left:925.90px;top:230px;font:12px/20px 'Liberation Sans',sans-serif;color:#000;transform:scaleX(0.9186);transform-origin:0 0;-webkit-text-stroke:0.22px #000;">149 682 528</span><span style="left:1005.90px;top:230px;font:12px/20px 'Liberation Sans',sans-serif;color:#000;transform:scaleX(0.9186);transform-origin:0 0;-webkit-text-stroke:0.22px #000;">142 672 224</span><svg style="left:547px;top:253px" width="11" height="11" viewBox="0 0 11 11" shape-rendering="crispEdges"><rect x="0" y="0" width="11" height="11" fill="#e6e0d8"/><path d="M0 0h11v1H1v10H0z" fill="#848484"/><rect x="1" y="1" width="9" height="9" fill="#fff"/><path d="M2 4h1v1h1v1h1v-1h1v-1h1v-1h1v-1h1v3h-1v1h-1v1h-1v1h-1v1h-1v-1h-1v-1h-1z" fill="#808080"/></svg><svg style="left:562px;top:252px" width="15" height="13" viewBox="0 0 15 13" shape-rendering="crispEdges"><path d="M2 0h5v1h1v1h6v10H0V2h1V1h1z" fill="#84848c"/><path d="M2 1h5v1h1v1h5v8H1V2h1z" fill="url(#yd)"/><path d="M2 1h5v1H2z M1 2h1v1H1z" fill="#ffffd8"/><path d="M14 3h1v10H1v-1h13z" fill="#000"/></svg><span style="left:583.90px;top:247px;font:12px/20px 'Liberation Sans',sans-serif;color:#000;transform:scaleX(0.8724);transform-origin:0 0;-webkit-text-stroke:0.22px #000;">.mission-control</span><span style="left:925.90px;top:247px;font:12px/20px 'Liberation Sans',sans-serif;color:#000;transform:scaleX(0.9186);transform-origin:0 0;-webkit-text-stroke:0.22px #000;">149 682 640</span><span style="left:1005.90px;top:247px;font:12px/20px 'Liberation Sans',sans-serif;color:#000;transform:scaleX(0.9186);transform-origin:0 0;-webkit-text-stroke:0.22px #000;">142 672 336</span><svg style="left:547px;top:270px" width="11" height="11" viewBox="0 0 11 11" shape-rendering="crispEdges"><rect x="0" y="0" width="11" height="11" fill="#e6e0d8"/><path d="M0 0h11v1H1v10H0z" fill="#848484"/><rect x="1" y="1" width="9" height="9" fill="#fff"/><path d="M2 4h1v1h1v1h1v-1h1v-1h1v-1h1v-1h1v3h-1v1h-1v1h-1v1h-1v1h-1v-1h-1v-1h-1z" fill="#808080"/></svg><svg style="left:562px;top:269px" width="15" height="13" viewBox="0 0 15 13" shape-rendering="crispEdges"><path d="M2 0h5v1h1v1h6v10H0V2h1V1h1z" fill="#84848c"/><path d="M2 1h5v1h1v1h5v8H1V2h1z" fill="url(#yd)"/><path d="M2 1h5v1H2z M1 2h1v1H1z" fill="#ffffd8"/><path d="M14 3h1v10H1v-1h13z" fill="#000"/></svg><span style="left:583.90px;top:264px;font:12px/20px 'Liberation Sans',sans-serif;color:#000;transform:scaleX(0.9150);transform-origin:0 0;-webkit-text-stroke:0.22px #000;">.pulse</span><span style="left:925.90px;top:264px;font:12px/20px 'Liberation Sans',sans-serif;color:#000;transform:scaleX(0.9186);transform-origin:0 0;-webkit-text-stroke:0.22px #000;">149 682 768</span><span style="left:1005.90px;top:264px;font:12px/20px 'Liberation Sans',sans-serif;color:#000;transform:scaleX(0.9186);transform-origin:0 0;-webkit-text-stroke:0.22px #000;">142 672 464</span><svg style="left:547px;top:287px" width="11" height="11" viewBox="0 0 11 11" shape-rendering="crispEdges"><rect x="0" y="0" width="11" height="11" fill="#e6e0d8"/><path d="M0 0h11v1H1v10H0z" fill="#848484"/><rect x="1" y="1" width="9" height="9" fill="#fff"/><path d="M2 4h1v1h1v1h1v-1h1v-1h1v-1h1v-1h1v3h-1v1h-1v1h-1v1h-1v1h-1v-1h-1v-1h-1z" fill="#808080"/></svg><svg style="left:562px;top:286px" width="15" height="13" viewBox="0 0 15 13" shape-rendering="crispEdges"><path d="M2 0h5v1h1v1h6v10H0V2h1V1h1z" fill="#84848c"/><path d="M2 1h5v1h1v1h5v8H1V2h1z" fill="url(#yd)"/><path d="M2 1h5v1H2z M1 2h1v1H1z" fill="#ffffd8"/><path d="M14 3h1v10H1v-1h13z" fill="#000"/></svg><span style="left:583.90px;top:281px;font:12px/20px 'Liberation Sans',sans-serif;color:#000;transform:scaleX(0.9157);transform-origin:0 0;-webkit-text-stroke:0.22px #000;">Видео</span><span style="left:925.90px;top:281px;font:12px/20px 'Liberation Sans',sans-serif;color:#000;transform:scaleX(0.9186);transform-origin:0 0;-webkit-text-stroke:0.22px #000;">149 682 472</span><span style="left:1005.90px;top:281px;font:12px/20px 'Liberation Sans',sans-serif;color:#000;transform:scaleX(0.9186);transform-origin:0 0;-webkit-text-stroke:0.22px #000;">142 672 168</span><svg style="left:547px;top:304px" width="11" height="11" viewBox="0 0 11 11" shape-rendering="crispEdges"><rect x="0" y="0" width="11" height="11" fill="#e6e0d8"/><path d="M0 0h11v1H1v10H0z" fill="#848484"/><rect x="1" y="1" width="9" height="9" fill="#fff"/><path d="M2 4h1v1h1v1h1v-1h1v-1h1v-1h1v-1h1v3h-1v1h-1v1h-1v1h-1v1h-1v-1h-1v-1h-1z" fill="#808080"/></svg><svg style="left:562px;top:303px" width="15" height="13" viewBox="0 0 15 13" shape-rendering="crispEdges"><path d="M2 0h5v1h1v1h6v10H0V2h1V1h1z" fill="#84848c"/><path d="M2 1h5v1h1v1h5v8H1V2h1z" fill="url(#yd)"/><path d="M2 1h5v1H2z M1 2h1v1H1z" fill="#ffffd8"/><path d="M14 3h1v10H1v-1h13z" fill="#000"/></svg><span style="left:583.90px;top:298px;font:12px/20px 'Liberation Sans',sans-serif;color:#000;transform:scaleX(0.9748);transform-origin:0 0;-webkit-text-stroke:0.22px #000;">Документы</span><span style="left:925.90px;top:298px;font:12px/20px 'Liberation Sans',sans-serif;color:#000;transform:scaleX(0.9186);transform-origin:0 0;-webkit-text-stroke:0.22px #000;">149 682 704</span><span style="left:1005.90px;top:298px;font:12px/20px 'Liberation Sans',sans-serif;color:#000;transform:scaleX(0.9186);transform-origin:0 0;-webkit-text-stroke:0.22px #000;">142 672 400</span><svg style="left:547px;top:321px" width="11" height="11" viewBox="0 0 11 11" shape-rendering="crispEdges"><rect x="0" y="0" width="11" height="11" fill="#e6e0d8"/><path d="M0 0h11v1H1v10H0z" fill="#848484"/><rect x="1" y="1" width="9" height="9" fill="#fff"/><path d="M2 4h1v1h1v1h1v-1h1v-1h1v-1h1v-1h1v3h-1v1h-1v1h-1v1h-1v1h-1v-1h-1v-1h-1z" fill="#808080"/></svg><svg style="left:562px;top:320px" width="15" height="13" viewBox="0 0 15 13" shape-rendering="crispEdges"><path d="M2 0h5v1h1v1h6v10H0V2h1V1h1z" fill="#84848c"/><path d="M2 1h5v1h1v1h5v8H1V2h1z" fill="url(#yd)"/><path d="M2 1h5v1H2z M1 2h1v1H1z" fill="#ffffd8"/><path d="M14 3h1v10H1v-1h13z" fill="#000"/></svg><span style="left:583.90px;top:315px;font:12px/20px 'Liberation Sans',sans-serif;color:#000;transform:scaleX(0.9960);transform-origin:0 0;-webkit-text-stroke:0.22px #000;">Загрузки</span><span style="left:925.90px;top:315px;font:12px/20px 'Liberation Sans',sans-serif;color:#000;transform:scaleX(0.9186);transform-origin:0 0;-webkit-text-stroke:0.22px #000;">149 682 696</span><span style="left:1005.90px;top:315px;font:12px/20px 'Liberation Sans',sans-serif;color:#000;transform:scaleX(0.9186);transform-origin:0 0;-webkit-text-stroke:0.22px #000;">142 672 392</span><svg style="left:547px;top:338px" width="11" height="11" viewBox="0 0 11 11" shape-rendering="crispEdges"><rect x="0" y="0" width="11" height="11" fill="#e6e0d8"/><path d="M0 0h11v1H1v10H0z" fill="#848484"/><rect x="1" y="1" width="9" height="9" fill="#fff"/><path d="M2 4h1v1h1v1h1v-1h1v-1h1v-1h1v-1h1v3h-1v1h-1v1h-1v1h-1v1h-1v-1h-1v-1h-1z" fill="#808080"/></svg><svg style="left:562px;top:337px" width="15" height="13" viewBox="0 0 15 13" shape-rendering="crispEdges"><path d="M2 0h5v1h1v1h6v10H0V2h1V1h1z" fill="#84848c"/><path d="M2 1h5v1h1v1h5v8H1V2h1z" fill="url(#yd)"/><path d="M2 1h5v1H2z M1 2h1v1H1z" fill="#ffffd8"/><path d="M14 3h1v10H1v-1h13z" fill="#000"/></svg><span style="left:583.90px;top:332px;font:12px/20px 'Liberation Sans',sans-serif;color:#000;transform:scaleX(0.9454);transform-origin:0 0;-webkit-text-stroke:0.22px #000;">Изображения</span><span style="left:925.90px;top:332px;font:12px/20px 'Liberation Sans',sans-serif;color:#000;transform:scaleX(0.9186);transform-origin:0 0;-webkit-text-stroke:0.22px #000;">149 682 464</span><span style="left:1005.90px;top:332px;font:12px/20px 'Liberation Sans',sans-serif;color:#000;transform:scaleX(0.9186);transform-origin:0 0;-webkit-text-stroke:0.22px #000;">142 672 160</span><svg style="left:547px;top:355px" width="11" height="11" viewBox="0 0 11 11" shape-rendering="crispEdges"><rect x="0" y="0" width="11" height="11" fill="#e6e0d8"/><path d="M0 0h11v1H1v10H0z" fill="#848484"/><rect x="1" y="1" width="9" height="9" fill="#fff"/><path d="M2 4h1v1h1v1h1v-1h1v-1h1v-1h1v-1h1v3h-1v1h-1v1h-1v1h-1v1h-1v-1h-1v-1h-1z" fill="#808080"/></svg><svg style="left:562px;top:354px" width="15" height="13" viewBox="0 0 15 13" shape-rendering="crispEdges"><path d="M2 0h5v1h1v1h6v10H0V2h1V1h1z" fill="#84848c"/><path d="M2 1h5v1h1v1h5v8H1V2h1z" fill="url(#yd)"/><path d="M2 1h5v1H2z M1 2h1v1H1z" fill="#ffffd8"/><path d="M14 3h1v10H1v-1h13z" fill="#000"/></svg><span style="left:583.90px;top:349px;font:12px/20px 'Liberation Sans',sans-serif;color:#000;transform:scaleX(0.9730);transform-origin:0 0;-webkit-text-stroke:0.22px #000;">Музыка</span><span style="left:925.90px;top:349px;font:12px/20px 'Liberation Sans',sans-serif;color:#000;transform:scaleX(0.9186);transform-origin:0 0;-webkit-text-stroke:0.22px #000;">149 682 712</span><span style="left:1005.90px;top:349px;font:12px/20px 'Liberation Sans',sans-serif;color:#000;transform:scaleX(0.9186);transform-origin:0 0;-webkit-text-stroke:0.22px #000;">142 672 408</span><svg style="left:547px;top:372px" width="11" height="11" viewBox="0 0 11 11" shape-rendering="crispEdges"><rect x="0" y="0" width="11" height="11" fill="#e6e0d8"/><path d="M0 0h11v1H1v10H0z" fill="#848484"/><rect x="1" y="1" width="9" height="9" fill="#fff"/><path d="M2 4h1v1h1v1h1v-1h1v-1h1v-1h1v-1h1v3h-1v1h-1v1h-1v1h-1v1h-1v-1h-1v-1h-1z" fill="#808080"/></svg><svg style="left:562px;top:371px" width="15" height="13" viewBox="0 0 15 13" shape-rendering="crispEdges"><path d="M2 0h5v1h1v1h6v10H0V2h1V1h1z" fill="#84848c"/><path d="M2 1h5v1h1v1h5v8H1V2h1z" fill="url(#yd)"/><path d="M2 1h5v1H2z M1 2h1v1H1z" fill="#ffffd8"/><path d="M14 3h1v10H1v-1h13z" fill="#000"/></svg><span style="left:583.90px;top:366px;font:12px/20px 'Liberation Sans',sans-serif;color:#000;transform:scaleX(0.9133);transform-origin:0 0;-webkit-text-stroke:0.22px #000;">Общедоступные</span><span style="left:925.90px;top:366px;font:12px/20px 'Liberation Sans',sans-serif;color:#000;transform:scaleX(0.9186);transform-origin:0 0;-webkit-text-stroke:0.22px #000;">149 682 456</span><span style="left:1005.90px;top:366px;font:12px/20px 'Liberation Sans',sans-serif;color:#000;transform:scaleX(0.9186);transform-origin:0 0;-webkit-text-stroke:0.22px #000;">142 672 152</span><svg style="left:547px;top:389px" width="11" height="11" viewBox="0 0 11 11" shape-rendering="crispEdges"><rect x="0" y="0" width="11" height="11" fill="#e6e0d8"/><path d="M0 0h11v1H1v10H0z" fill="#848484"/><rect x="1" y="1" width="9" height="9" fill="#fff"/><path d="M2 4h1v1h1v1h1v-1h1v-1h1v-1h1v-1h1v3h-1v1h-1v1h-1v1h-1v1h-1v-1h-1v-1h-1z" fill="#808080"/></svg><svg style="left:562px;top:388px" width="15" height="13" viewBox="0 0 15 13" shape-rendering="crispEdges"><path d="M2 0h5v1h1v1h6v10H0V2h1V1h1z" fill="#84848c"/><path d="M2 1h5v1h1v1h5v8H1V2h1z" fill="url(#yd)"/><path d="M2 1h5v1H2z M1 2h1v1H1z" fill="#ffffd8"/><path d="M14 3h1v10H1v-1h13z" fill="#000"/></svg><span style="left:583.90px;top:383px;font:12px/20px 'Liberation Sans',sans-serif;color:#000;transform:scaleX(0.9200);transform-origin:0 0;-webkit-text-stroke:0.22px #000;">Рабочий стол</span><span style="left:925.90px;top:383px;font:12px/20px 'Liberation Sans',sans-serif;color:#000;transform:scaleX(0.9186);transform-origin:0 0;-webkit-text-stroke:0.22px #000;">149 682 440</span><span style="left:1005.90px;top:383px;font:12px/20px 'Liberation Sans',sans-serif;color:#000;transform:scaleX(0.9186);transform-origin:0 0;-webkit-text-stroke:0.22px #000;">142 672 136</span><svg style="left:547px;top:406px" width="11" height="11" viewBox="0 0 11 11" shape-rendering="crispEdges"><rect x="0" y="0" width="11" height="11" fill="#e6e0d8"/><path d="M0 0h11v1H1v10H0z" fill="#848484"/><rect x="1" y="1" width="9" height="9" fill="#fff"/><path d="M2 4h1v1h1v1h1v-1h1v-1h1v-1h1v-1h1v3h-1v1h-1v1h-1v1h-1v1h-1v-1h-1v-1h-1z" fill="#808080"/></svg><svg style="left:562px;top:405px" width="15" height="13" viewBox="0 0 15 13" shape-rendering="crispEdges"><path d="M2 0h5v1h1v1h6v10H0V2h1V1h1z" fill="#84848c"/><path d="M2 1h5v1h1v1h5v8H1V2h1z" fill="url(#yd)"/><path d="M2 1h5v1H2z M1 2h1v1H1z" fill="#ffffd8"/><path d="M14 3h1v10H1v-1h13z" fill="#000"/></svg><span style="left:583.90px;top:400px;font:12px/20px 'Liberation Sans',sans-serif;color:#000;transform:scaleX(0.9064);transform-origin:0 0;-webkit-text-stroke:0.22px #000;">Шаблоны</span><span style="left:925.90px;top:400px;font:12px/20px 'Liberation Sans',sans-serif;color:#000;transform:scaleX(0.9186);transform-origin:0 0;-webkit-text-stroke:0.22px #000;">149 682 448</span><span style="left:1005.90px;top:400px;font:12px/20px 'Liberation Sans',sans-serif;color:#000;transform:scaleX(0.9186);transform-origin:0 0;-webkit-text-stroke:0.22px #000;">142 672 144</span><svg style="left:547px;top:423px" width="11" height="11" viewBox="0 0 11 11" shape-rendering="crispEdges"><rect x="0" y="0" width="11" height="11" fill="#e6e0d8"/><path d="M0 0h11v1H1v10H0z" fill="#848484"/><rect x="1" y="1" width="9" height="9" fill="#fff"/><path d="M2 4h1v1h1v1h1v-1h1v-1h1v-1h1v-1h1v3h-1v1h-1v1h-1v1h-1v1h-1v-1h-1v-1h-1z" fill="#808080"/></svg><svg style="left:564px;top:420px" width="13" height="16" viewBox="0 0 13 16" shape-rendering="crispEdges"><path d="M0 0h9l4 4v12H0z" fill="#a8a8a8"/><path d="M12 4h1v12H0v-1h12z" fill="#808080"/><path d="M1 1h8v3h3v11H1z" fill="#f8f8f8"/><path d="M9 1l3 3H9z" fill="#e4e4e4"/><path d="M9 0l4 4h-1L9 1z" fill="#808080"/></svg><span style="left:583.90px;top:417px;font:12px/20px 'Liberation Sans',sans-serif;color:#000;transform:scaleX(0.9174);transform-origin:0 0;-webkit-text-stroke:0.22px #000;">.bashrc</span><span style="left:878.80px;top:417px;font:12px/20px 'Liberation Sans',sans-serif;color:#000;transform:scaleX(0.8927);transform-origin:0 0;-webkit-text-stroke:0.22px #000;">bas...</span><span style="left:925.90px;top:417px;font:12px/20px 'Liberation Sans',sans-serif;color:#000;transform:scaleX(0.9186);transform-origin:0 0;-webkit-text-stroke:0.22px #000;">149 878 824</span><span style="left:1005.90px;top:417px;font:12px/20px 'Liberation Sans',sans-serif;color:#000;transform:scaleX(0.9186);transform-origin:0 0;-webkit-text-stroke:0.22px #000;">142 868 520</span><svg style="left:547px;top:440px" width="11" height="11" viewBox="0 0 11 11" shape-rendering="crispEdges"><rect x="0" y="0" width="11" height="11" fill="#e6e0d8"/><path d="M0 0h11v1H1v10H0z" fill="#848484"/><rect x="1" y="1" width="9" height="9" fill="#fff"/><path d="M2 4h1v1h1v1h1v-1h1v-1h1v-1h1v-1h1v3h-1v1h-1v1h-1v1h-1v1h-1v-1h-1v-1h-1z" fill="#808080"/></svg><svg style="left:564px;top:437px" width="13" height="16" viewBox="0 0 13 16" shape-rendering="crispEdges"><path d="M0 0h9l4 4v12H0z" fill="#a8a8a8"/><path d="M12 4h1v12H0v-1h12z" fill="#808080"/><path d="M1 1h8v3h3v11H1z" fill="#f8f8f8"/><path d="M9 1l3 3H9z" fill="#e4e4e4"/><path d="M9 0l4 4h-1L9 1z" fill="#808080"/></svg><span style="left:583.90px;top:434px;font:12px/20px 'Liberation Sans',sans-serif;color:#000;transform:scaleX(0.9065);transform-origin:0 0;-webkit-text-stroke:0.22px #000;">.bash_logout</span><span style="left:878.80px;top:434px;font:12px/20px 'Liberation Sans',sans-serif;color:#000;transform:scaleX(0.8927);transform-origin:0 0;-webkit-text-stroke:0.22px #000;">bas...</span><span style="left:925.90px;top:434px;font:12px/20px 'Liberation Sans',sans-serif;color:#000;transform:scaleX(0.9186);transform-origin:0 0;-webkit-text-stroke:0.22px #000;">149 878 816</span><span style="left:1005.90px;top:434px;font:12px/20px 'Liberation Sans',sans-serif;color:#000;transform:scaleX(0.9186);transform-origin:0 0;-webkit-text-stroke:0.22px #000;">142 868 512</span><svg style="left:547px;top:457px" width="11" height="11" viewBox="0 0 11 11" shape-rendering="crispEdges"><rect x="0" y="0" width="11" height="11" fill="#e6e0d8"/><path d="M0 0h11v1H1v10H0z" fill="#848484"/><rect x="1" y="1" width="9" height="9" fill="#fff"/><path d="M2 4h1v1h1v1h1v-1h1v-1h1v-1h1v-1h1v3h-1v1h-1v1h-1v1h-1v1h-1v-1h-1v-1h-1z" fill="#808080"/></svg><svg style="left:564px;top:454px" width="13" height="16" viewBox="0 0 13 16" shape-rendering="crispEdges"><path d="M0 0h9l4 4v12H0z" fill="#a8a8a8"/><path d="M12 4h1v12H0v-1h12z" fill="#808080"/><path d="M1 1h8v3h3v11H1z" fill="#f8f8f8"/><path d="M9 1l3 3H9z" fill="#e4e4e4"/><path d="M9 0l4 4h-1L9 1z" fill="#808080"/></svg><span style="left:583.90px;top:451px;font:12px/20px 'Liberation Sans',sans-serif;color:#000;transform:scaleX(0.8967);transform-origin:0 0;-webkit-text-stroke:0.22px #000;">.dmrc</span><span style="left:880.55px;top:451px;font:12px/20px 'Liberation Sans',sans-serif;color:#000;transform:scaleX(0.8813);transform-origin:0 0;-webkit-text-stroke:0.22px #000;">dmrc</span><span style="left:925.90px;top:451px;font:12px/20px 'Liberation Sans',sans-serif;color:#000;transform:scaleX(0.9186);transform-origin:0 0;-webkit-text-stroke:0.22px #000;">552 573 096</span><span style="left:1005.90px;top:451px;font:12px/20px 'Liberation Sans',sans-serif;color:#000;transform:scaleX(0.9186);transform-origin:0 0;-webkit-text-stroke:0.22px #000;">545 562 792</span><svg style="left:547px;top:474px" width="11" height="11" viewBox="0 0 11 11" shape-rendering="crispEdges"><rect x="0" y="0" width="11" height="11" fill="#e6e0d8"/><path d="M0 0h11v1H1v10H0z" fill="#848484"/><rect x="1" y="1" width="9" height="9" fill="#fff"/><path d="M2 4h1v1h1v1h1v-1h1v-1h1v-1h1v-1h1v3h-1v1h-1v1h-1v1h-1v1h-1v-1h-1v-1h-1z" fill="#808080"/></svg><svg style="left:564px;top:471px" width="13" height="16" viewBox="0 0 13 16" shape-rendering="crispEdges"><path d="M0 0h9l4 4v12H0z" fill="#a8a8a8"/><path d="M12 4h1v12H0v-1h12z" fill="#808080"/><path d="M1 1h8v3h3v11H1z" fill="#f8f8f8"/><path d="M9 1l3 3H9z" fill="#e4e4e4"/><path d="M9 0l4 4h-1L9 1z" fill="#808080"/></svg><span style="left:583.90px;top:468px;font:12px/20px 'Liberation Sans',sans-serif;color:#000;transform:scaleX(0.9034);transform-origin:0 0;-webkit-text-stroke:0.22px #000;">.gtk-bookmarks</span><span style="left:878.80px;top:468px;font:12px/20px 'Liberation Sans',sans-serif;color:#000;transform:scaleX(0.9198);transform-origin:0 0;-webkit-text-stroke:0.22px #000;">gtk-...</span><span style="left:925.90px;top:468px;font:12px/20px 'Liberation Sans',sans-serif;color:#000;transform:scaleX(0.9186);transform-origin:0 0;-webkit-text-stroke:0.22px #000;">552 573 128</span><span style="left:1005.90px;top:468px;font:12px/20px 'Liberation Sans',sans-serif;color:#000;transform:scaleX(0.9186);transform-origin:0 0;-webkit-text-stroke:0.22px #000;">545 562 824</span><svg style="left:547px;top:491px" width="11" height="11" viewBox="0 0 11 11" shape-rendering="crispEdges"><rect x="0" y="0" width="11" height="11" fill="#e6e0d8"/><path d="M0 0h11v1H1v10H0z" fill="#848484"/><rect x="1" y="1" width="9" height="9" fill="#fff"/><path d="M2 4h1v1h1v1h1v-1h1v-1h1v-1h1v-1h1v3h-1v1h-1v1h-1v1h-1v1h-1v-1h-1v-1h-1z" fill="#808080"/></svg><svg style="left:564px;top:488px" width="13" height="16" viewBox="0 0 13 16" shape-rendering="crispEdges"><path d="M0 0h9l4 4v12H0z" fill="#a8a8a8"/><path d="M12 4h1v12H0v-1h12z" fill="#808080"/><path d="M1 1h8v3h3v11H1z" fill="#f8f8f8"/><path d="M9 1l3 3H9z" fill="#e4e4e4"/><path d="M9 0l4 4h-1L9 1z" fill="#808080"/></svg><span style="left:583.90px;top:485px;font:12px/20px 'Liberation Sans',sans-serif;color:#000;transform:scaleX(0.8838);transform-origin:0 0;-webkit-text-stroke:0.22px #000;">.ICEauthority</span><span style="left:878.80px;top:485px;font:12px/20px 'Liberation Sans',sans-serif;color:#000;transform:scaleX(0.9273);transform-origin:0 0;-webkit-text-stroke:0.22px #000;">ice...</span><span style="left:925.90px;top:485px;font:12px/20px 'Liberation Sans',sans-serif;color:#000;transform:scaleX(0.9186);transform-origin:0 0;-webkit-text-stroke:0.22px #000;">149 878 872</span><span style="left:1005.90px;top:485px;font:12px/20px 'Liberation Sans',sans-serif;color:#000;transform:scaleX(0.9186);transform-origin:0 0;-webkit-text-stroke:0.22px #000;">142 868 568</span><svg style="left:547px;top:508px" width="11" height="11" viewBox="0 0 11 11" shape-rendering="crispEdges"><rect x="0" y="0" width="11" height="11" fill="#e6e0d8"/><path d="M0 0h11v1H1v10H0z" fill="#848484"/><rect x="1" y="1" width="9" height="9" fill="#fff"/><path d="M2 4h1v1h1v1h1v-1h1v-1h1v-1h1v-1h1v3h-1v1h-1v1h-1v1h-1v1h-1v-1h-1v-1h-1z" fill="#808080"/></svg><svg style="left:564px;top:505px" width="13" height="16" viewBox="0 0 13 16" shape-rendering="crispEdges"><path d="M0 0h9l4 4v12H0z" fill="#a8a8a8"/><path d="M12 4h1v12H0v-1h12z" fill="#808080"/><path d="M1 1h8v3h3v11H1z" fill="#f8f8f8"/><path d="M9 1l3 3H9z" fill="#e4e4e4"/><path d="M9 0l4 4h-1L9 1z" fill="#808080"/></svg><span style="left:583.90px;top:502px;font:12px/20px 'Liberation Sans',sans-serif;color:#000;transform:scaleX(0.8857);transform-origin:0 0;-webkit-text-stroke:0.22px #000;">.profile</span><span style="left:878.80px;top:502px;font:12px/20px 'Liberation Sans',sans-serif;color:#000;transform:scaleX(0.8996);transform-origin:0 0;-webkit-text-stroke:0.22px #000;">prof...</span><span style="left:925.90px;top:502px;font:12px/20px 'Liberation Sans',sans-serif;color:#000;transform:scaleX(0.9186);transform-origin:0 0;-webkit-text-stroke:0.22px #000;">149 878 808</span><span style="left:1005.90px;top:502px;font:12px/20px 'Liberation Sans',sans-serif;color:#000;transform:scaleX(0.9186);transform-origin:0 0;-webkit-text-stroke:0.22px #000;">142 868 504</span><svg style="left:547px;top:525px" width="11" height="11" viewBox="0 0 11 11" shape-rendering="crispEdges"><rect x="0" y="0" width="11" height="11" fill="#e6e0d8"/><path d="M0 0h11v1H1v10H0z" fill="#848484"/><rect x="1" y="1" width="9" height="9" fill="#fff"/><path d="M2 4h1v1h1v1h1v-1h1v-1h1v-1h1v-1h1v3h-1v1h-1v1h-1v1h-1v1h-1v-1h-1v-1h-1z" fill="#808080"/></svg><svg style="left:564px;top:522px" width="13" height="16" viewBox="0 0 13 16" shape-rendering="crispEdges"><path d="M0 0h9l4 4v12H0z" fill="#a8a8a8"/><path d="M12 4h1v12H0v-1h12z" fill="#808080"/><path d="M1 1h8v3h3v11H1z" fill="#f8f8f8"/><path d="M9 1l3 3H9z" fill="#e4e4e4"/><path d="M9 0l4 4h-1L9 1z" fill="#808080"/></svg><span style="left:583.90px;top:519px;font:12px/20px 'Liberation Sans',sans-serif;color:#000;transform:scaleX(0.9038);transform-origin:0 0;-webkit-text-stroke:0.22px #000;">.pulse-cookie</span><span style="left:878.80px;top:519px;font:12px/20px 'Liberation Sans',sans-serif;color:#000;transform:scaleX(0.9033);transform-origin:0 0;-webkit-text-stroke:0.22px #000;">pul...</span><span style="left:925.90px;top:519px;font:12px/20px 'Liberation Sans',sans-serif;color:#000;transform:scaleX(0.9310);transform-origin:0 0;-webkit-text-stroke:0.22px #000;">498 115 144</span><span style="left:1005.90px;top:519px;font:12px/20px 'Liberation Sans',sans-serif;color:#000;transform:scaleX(0.9186);transform-origin:0 0;-webkit-text-stroke:0.22px #000;">491 104 840</span><svg style="left:547px;top:542px" width="11" height="11" viewBox="0 0 11 11" shape-rendering="crispEdges"><rect x="0" y="0" width="11" height="11" fill="#e6e0d8"/><path d="M0 0h11v1H1v10H0z" fill="#848484"/><rect x="1" y="1" width="9" height="9" fill="#fff"/><path d="M2 4h1v1h1v1h1v-1h1v-1h1v-1h1v-1h1v3h-1v1h-1v1h-1v1h-1v1h-1v-1h-1v-1h-1z" fill="#808080"/></svg><svg style="left:564px;top:539px" width="13" height="16" viewBox="0 0 13 16" shape-rendering="crispEdges"><path d="M0 0h9l4 4v12H0z" fill="#a8a8a8"/><path d="M12 4h1v12H0v-1h12z" fill="#808080"/><path d="M1 1h8v3h3v11H1z" fill="#f8f8f8"/><path d="M9 1l3 3H9z" fill="#e4e4e4"/><path d="M9 0l4 4h-1L9 1z" fill="#808080"/></svg><span style="left:583.90px;top:536px;font:12px/20px 'Liberation Sans',sans-serif;color:#000;transform:scaleX(0.8873);transform-origin:0 0;-webkit-text-stroke:0.22px #000;">.Xauthority</span><span style="left:878.80px;top:536px;font:12px/20px 'Liberation Sans',sans-serif;color:#000;transform:scaleX(0.8927);transform-origin:0 0;-webkit-text-stroke:0.22px #000;">xau...</span><svg style="left:547px;top:559px" width="11" height="11" viewBox="0 0 11 11" shape-rendering="crispEdges"><rect x="0" y="0" width="11" height="11" fill="#e6e0d8"/><path d="M0 0h11v1H1v10H0z" fill="#848484"/><rect x="1" y="1" width="9" height="9" fill="#fff"/><path d="M2 4h1v1h1v1h1v-1h1v-1h1v-1h1v-1h1v3h-1v1h-1v1h-1v1h-1v1h-1v-1h-1v-1h-1z" fill="#808080"/></svg><svg style="left:564px;top:556px" width="13" height="16" viewBox="0 0 13 16" shape-rendering="crispEdges"><path d="M0 0h9l4 4v12H0z" fill="#a8a8a8"/><path d="M12 4h1v12H0v-1h12z" fill="#808080"/><path d="M1 1h8v3h3v11H1z" fill="#f8f8f8"/><path d="M9 1l3 3H9z" fill="#e4e4e4"/><path d="M9 0l4 4h-1L9 1z" fill="#808080"/></svg><span style="left:583.90px;top:553px;font:12px/20px 'Liberation Sans',sans-serif;color:#000;transform:scaleX(0.8588);transform-origin:0 0;-webkit-text-stroke:0.22px #000;">.xsession-errors</span><span style="left:878.80px;top:553px;font:12px/20px 'Liberation Sans',sans-serif;color:#000;transform:scaleX(0.9137);transform-origin:0 0;-webkit-text-stroke:0.22px #000;">xse...</span><span style="left:925.90px;top:553px;font:12px/20px 'Liberation Sans',sans-serif;color:#000;transform:scaleX(0.9186);transform-origin:0 0;-webkit-text-stroke:0.22px #000;">552 573 160</span><span style="left:1005.90px;top:553px;font:12px/20px 'Liberation Sans',sans-serif;color:#000;transform:scaleX(0.9186);transform-origin:0 0;-webkit-text-stroke:0.22px #000;">545 562 856</span><span style="left:1132.00px;top:553px;font:12px/20px 'Liberation Sans',sans-serif;color:#000;">1</span><svg style="left:547px;top:576px" width="11" height="11" viewBox="0 0 11 11" shape-rendering="crispEdges"><rect x="0" y="0" width="11" height="11" fill="#e6e0d8"/><path d="M0 0h11v1H1v10H0z" fill="#848484"/><rect x="1" y="1" width="9" height="9" fill="#fff"/><path d="M2 4h1v1h1v1h1v-1h1v-1h1v-1h1v-1h1v3h-1v1h-1v1h-1v1h-1v1h-1v-1h-1v-1h-1z" fill="#808080"/></svg><svg style="left:564px;top:573px" width="13" height="16" viewBox="0 0 13 16" shape-rendering="crispEdges"><path d="M0 0h9l4 4v12H0z" fill="#a8a8a8"/><path d="M12 4h1v12H0v-1h12z" fill="#808080"/><path d="M1 1h8v3h3v11H1z" fill="#f8f8f8"/><path d="M9 1l3 3H9z" fill="#e4e4e4"/><path d="M9 0l4 4h-1L9 1z" fill="#808080"/></svg><span style="left:583.90px;top:570px;font:12px/20px 'Liberation Sans',sans-serif;color:#000;transform:scaleX(0.8625);transform-origin:0 0;-webkit-text-stroke:0.22px #000;">.xsession-errors.old</span><span style="left:884.90px;top:570px;font:12px/20px 'Liberation Sans',sans-serif;color:#000;transform:scaleX(0.9242);transform-origin:0 0;-webkit-text-stroke:0.22px #000;">old</span><span style="left:925.90px;top:570px;font:12px/20px 'Liberation Sans',sans-serif;color:#000;transform:scaleX(0.9186);transform-origin:0 0;-webkit-text-stroke:0.22px #000;">552 563 960</span><span style="left:1005.90px;top:570px;font:12px/20px 'Liberation Sans',sans-serif;color:#000;transform:scaleX(0.9186);transform-origin:0 0;-webkit-text-stroke:0.22px #000;">545 553 656</span><span style="left:1132.00px;top:570px;font:12px/20px 'Liberation Sans',sans-serif;color:#000;">1</span><svg style="left:547px;top:593px" width="11" height="11" viewBox="0 0 11 11" shape-rendering="crispEdges"><rect x="0" y="0" width="11" height="11" fill="#e6e0d8"/><path d="M0 0h11v1H1v10H0z" fill="#848484"/><rect x="1" y="1" width="9" height="9" fill="#fff"/><path d="M2 4h1v1h1v1h1v-1h1v-1h1v-1h1v-1h1v3h-1v1h-1v1h-1v1h-1v1h-1v-1h-1v-1h-1z" fill="#808080"/></svg><svg style="left:564px;top:590px" width="13" height="16" viewBox="0 0 13 16" shape-rendering="crispEdges"><path d="M0 0h9l4 4v12H0z" fill="#a8a8a8"/><path d="M12 4h1v12H0v-1h12z" fill="#808080"/><path d="M1 1h8v3h3v11H1z" fill="#f8f8f8"/><path d="M9 1l3 3H9z" fill="#e4e4e4"/><path d="M9 0l4 4h-1L9 1z" fill="#808080"/></svg><span style="left:583.90px;top:587px;font:12px/20px 'Liberation Sans',sans-serif;color:#000;transform:scaleX(0.8902);transform-origin:0 0;-webkit-text-stroke:0.22px #000;">examples.desktop</span><span style="left:878.80px;top:587px;font:12px/20px 'Liberation Sans',sans-serif;color:#000;transform:scaleX(0.8927);transform-origin:0 0;-webkit-text-stroke:0.22px #000;">des...</span><span style="left:925.90px;top:587px;font:12px/20px 'Liberation Sans',sans-serif;color:#000;transform:scaleX(0.9186);transform-origin:0 0;-webkit-text-stroke:0.22px #000;">149 878 784</span><span style="left:1005.90px;top:587px;font:12px/20px 'Liberation Sans',sans-serif;color:#000;transform:scaleX(0.9186);transform-origin:0 0;-webkit-text-stroke:0.22px #000;">142 868 480</span><div style="left:4px;top:800px;width:200px;height:17px;background:#d4d0c8;box-sizing:border-box;border-top:1px solid #808080;border-left:1px solid #808080;border-right:1px solid #fff;border-bottom:1px solid #fff;"></div><div style="left:206px;top:800px;width:198px;height:17px;background:#d4d0c8;box-sizing:border-box;border-top:1px solid #808080;border-left:1px solid #808080;border-right:1px solid #fff;border-bottom:1px solid #fff;"></div><div style="left:406px;top:800px;width:198px;height:17px;background:#d4d0c8;box-sizing:border-box;border-top:1px solid #808080;border-left:1px solid #808080;border-right:1px solid #fff;border-bottom:1px solid #fff;"></div><div style="left:606px;top:800px;width:532px;height:17px;background:#d4d0c8;box-sizing:border-box;border-top:1px solid #808080;border-left:1px solid #808080;border-bottom:1px solid #fff;"></div><span style="left:8.30px;top:799px;font:11px/20px 'Liberation Sans',sans-serif;color:#000;letter-spacing:0.116px;-webkit-text-stroke:0.15px #000;">Objects: 29</span><span style="left:211.00px;top:799px;font:11px/20px 'Liberation Sans',sans-serif;color:#000;letter-spacing:0.086px;-webkit-text-stroke:0.15px #000;">Total: 121,65 Kb</span><div style="left:4px;top:817px;width:1134px;height:2px;background:#808080;"></div><div style="left:4px;top:819px;width:1134px;height:3px;background:#fff;"></div><div style="left:4px;top:822px;width:1px;height:41px;background:#fff;"></div><div style="left:10px;top:829px;width:1128px;height:1px;background:#808080;"></div><div style="left:10px;top:829px;width:1px;height:34px;background:#808080;"></div><div style="left:11px;top:830px;width:1127px;height:33px;background:#fff;"></div><span style="left:14.00px;top:831px;font:11.67px/20px 'Liberation Mono',monospace;color:#000;">Inodes count: 0x01C6A000 (29 794 304)</span><span style="left:14.00px;top:846px;font:11.67px/20px 'Liberation Mono',monospace;color:#000;">Inodes per group: 0x00002000 (8 192)</span><div style="left:215px;top:351px;width:291px;height:212px;background:#d4d0c8;box-sizing:border-box;border-top:1px solid #d4d0c8;border-left:1px solid #d4d0c8;border-right:1px solid #404040;border-bottom:1px solid #404040;"></div><div style="left:216px;top:352px;width:289px;height:210px;background:#d4d0c8;box-sizing:border-box;border-top:1px solid #fff;border-left:1px solid #fff;border-right:1px solid #808080;border-bottom:1px solid #808080;"></div><span style="left:233.70px;top:352px;font:11px/20px 'Liberation Sans',sans-serif;color:#000;letter-spacing:0.081px;-webkit-text-stroke:0.15px #000;">Refresh</span><span style="left:451.60px;top:352px;font:11px/20px 'Liberation Sans',sans-serif;color:#000;letter-spacing:0.663px;-webkit-text-stroke:0.15px #000;">F5</span><div style="left:219px;top:374px;width:284px;height:1px;background:#808080;"></div><div style="left:219px;top:375px;width:284px;height:1px;background:#fff;"></div><span style="left:233.70px;top:378px;font:11px/20px 'Liberation Sans',sans-serif;color:#000;letter-spacing:0.410px;-webkit-text-stroke:0.15px #000;">Save...</span><span style="left:451.60px;top:378px;font:11px/20px 'Liberation Sans',sans-serif;color:#000;letter-spacing:0.663px;-webkit-text-stroke:0.15px #000;">F2</span><div style="left:219px;top:400px;width:284px;height:1px;background:#808080;"></div><div style="left:219px;top:401px;width:284px;height:1px;background:#fff;"></div><span style="left:233.70px;top:404px;font:11px/20px 'Liberation Sans',sans-serif;color:#000;letter-spacing:0.046px;-webkit-text-stroke:0.15px #000;">View the first sector</span><span style="left:451.60px;top:404px;font:11px/20px 'Liberation Sans',sans-serif;color:#000;letter-spacing:0.663px;-webkit-text-stroke:0.15px #000;">F3</span><span style="left:233.70px;top:421px;font:11px/20px 'Liberation Sans',sans-serif;color:#000;letter-spacing:-0.049px;-webkit-text-stroke:0.15px #000;">Map</span><div style="left:219px;top:443px;width:284px;height:1px;background:#808080;"></div><div style="left:219px;top:444px;width:284px;height:1px;background:#fff;"></div><span style="left:233.70px;top:447px;font:11px/20px 'Liberation Sans',sans-serif;color:#000;letter-spacing:-0.080px;-webkit-text-stroke:0.15px #000;">Find files</span><span style="left:451.60px;top:447px;font:11px/20px 'Liberation Sans',sans-serif;color:#000;letter-spacing:0.410px;-webkit-text-stroke:0.15px #000;">Ctrl+F</span><span style="left:233.70px;top:464px;font:11px/20px 'Liberation Sans',sans-serif;color:#000;letter-spacing:0.092px;-webkit-text-stroke:0.15px #000;">Map of folder</span><div style="left:218px;top:483px;width:285px;height:17px;background:#0a246a;"></div><span style="left:233.70px;top:481px;font:11px/20px 'Liberation Sans',sans-serif;color:#fff;letter-spacing:0.059px;-webkit-text-stroke:0.15px #fff;">Export file list</span><span style="left:233.70px;top:498px;font:11px/20px 'Liberation Sans',sans-serif;color:#000;letter-spacing:-0.072px;-webkit-text-stroke:0.15px #000;">Map of marked folders and files</span><span style="left:233.70px;top:515px;font:11px/20px 'Liberation Sans',sans-serif;color:#000;letter-spacing:-0.028px;-webkit-text-stroke:0.15px #000;">Generate report on marked files and folders</span><div style="left:219px;top:537px;width:284px;height:1px;background:#808080;"></div><div style="left:219px;top:538px;width:284px;height:1px;background:#fff;"></div><span style="left:233.70px;top:541px;font:11px/20px 'Liberation Sans',sans-serif;color:#000;letter-spacing:0.018px;-webkit-text-stroke:0.15px #000;">Properties</span><div style="left:210px;top:475px;width:302px;height:31px;box-sizing:border-box;border:5px solid #e53a2e;border-radius:8px;"></div><svg style="left:330px;top:165px" width="60" height="310" viewBox="330 165 60 310">
<path d="M343.600 443.300 Q342.300 441.300 344.800 441.600 L354 443.500 L357 174 Q358.900 170.400 360.800 174 L366.800 443.500 L375.500 441.600 Q378 441.200 376.800 443.500 L361.800 464 Q360.500 465.600 359.200 464 Z" fill="#7a6a64" opacity="0.550" transform="translate(1.300,1.300)"/>
<path d="M343.600 443.300 Q342.300 441.300 344.800 441.600 L354 443.500 L357 174 Q358.900 170.400 360.800 174 L366.800 443.500 L375.500 441.600 Q378 441.200 376.800 443.500 L361.800 464 Q360.500 465.600 359.200 464 Z" fill="#e53a2e"/>
</svg><svg style="left:986px;top:810px" width="150" height="28" viewBox="0 0 150 28"><g transform="translate(2.2,2.4)" stroke="#f4ecec" stroke-width="2.200" fill="none" opacity="0.9" stroke-linecap="square"><path transform="translate(0.0,0)" d="M9 1 L7 4 M5 4 H19 V13 M5 4 V12 Q5 14 3 15 M2 9 H22 M11 6.500 L12.500 8 M11 10.500 L12.500 12 M4 16 H20 V21 M4 16 V21 M9.500 16 V21 M14.500 16 V21 M1 22 H23"/><path transform="translate(24.2,0)" d="M7 1 L9 3.500 M17 1 L15 3.500 M2 5 H22 M12 5 L11 8 M5 8.500 H19 V22 H5 Z M5 13 H19 M5 17.500 H19"/><path transform="translate(48.4,0)" d="M6 1 V10 M1 5.500 H11 M2 2 L4 4 M10 2 L8 4 M6 6 L1 10 M6 6 L11 10 M5 11 L3 16 L10 21 M10 13 Q8 18 1 22 M1 15 H11 M16 1 L13 9 M14.500 6 H23 M21 6 Q20 15 12 22 M15 10 Q17 17 23 22"/><path transform="translate(72.6,0)" d="M1 6 H8 M5 1 V20 Q5 22 2 21 M1 15 L8 12 M11 2 H22 V7 H11 M11 2 V13 Q11 19 9 22 M11 11.500 H23 M17 7.500 V15 M13 15.500 H21 V22 H13 Z"/><path transform="translate(96.8,0)" d="M4 1 V22 M1 7 L2 11 M7 6 L8 9 M9 6 H23 M15 1 Q15 12 9 21 M14 11 L12.500 15 M21 10 L19 14 M17 8 Q17 16 12 22 M17 14 Q19 19 23 22"/><path transform="translate(121.0,0)" d="M8 1 L4 6 M7 3 H21 M7 6.500 H19 V13.500 H7 Z M7 10 H19 M9 14 L4 19 M8 16 H18 Q15 20 3 23 M9 17.500 Q13 21 22 23"/></g><g transform="translate(1,1)" stroke="#606060" stroke-width="2.200" fill="none" opacity="0.82" stroke-linecap="square"><path transform="translate(0.0,0)" d="M9 1 L7 4 M5 4 H19 V13 M5 4 V12 Q5 14 3 15 M2 9 H22 M11 6.500 L12.500 8 M11 10.500 L12.500 12 M4 16 H20 V21 M4 16 V21 M9.500 16 V21 M14.500 16 V21 M1 22 H23"/><path transform="translate(24.2,0)" d="M7 1 L9 3.500 M17 1 L15 3.500 M2 5 H22 M12 5 L11 8 M5 8.500 H19 V22 H5 Z M5 13 H19 M5 17.500 H19"/><path transform="translate(48.4,0)" d="M6 1 V10 M1 5.500 H11 M2 2 L4 4 M10 2 L8 4 M6 6 L1 10 M6 6 L11 10 M5 11 L3 16 L10 21 M10 13 Q8 18 1 22 M1 15 H11 M16 1 L13 9 M14.500 6 H23 M21 6 Q20 15 12 22 M15 10 Q17 17 23 22"/><path transform="translate(72.6,0)" d="M1 6 H8 M5 1 V20 Q5 22 2 21 M1 15 L8 12 M11 2 H22 V7 H11 M11 2 V13 Q11 19 9 22 M11 11.500 H23 M17 7.500 V15 M13 15.500 H21 V22 H13 Z"/><path transform="translate(96.8,0)" d="M4 1 V22 M1 7 L2 11 M7 6 L8 9 M9 6 H23 M15 1 Q15 12 9 21 M14 11 L12.500 15 M21 10 L19 14 M17 8 Q17 16 12 22 M17 14 Q19 19 23 22"/><path transform="translate(121.0,0)" d="M8 1 L4 6 M7 3 H21 M7 6.500 H19 V13.500 H7 Z M7 10 H19 M9 14 L4 19 M8 16 H18 Q15 20 3 23 M9 17.500 Q13 21 22 23"/></g></svg><span style="left:995.40px;top:840.4px;font:22px/20px 'Liberation Sans',sans-serif;color:#f4e6e6;letter-spacing:-0.759px;-webkit-text-stroke:0.7px #f4e6e6;">18913587620</span><span style="left:994.20px;top:839.1px;font:22px/20px 'Liberation Sans',sans-serif;color:#6c6c6c;letter-spacing:-0.759px;-webkit-text-stroke:0.5px #6c6c6c;">18913587620</span></div></body></html>
